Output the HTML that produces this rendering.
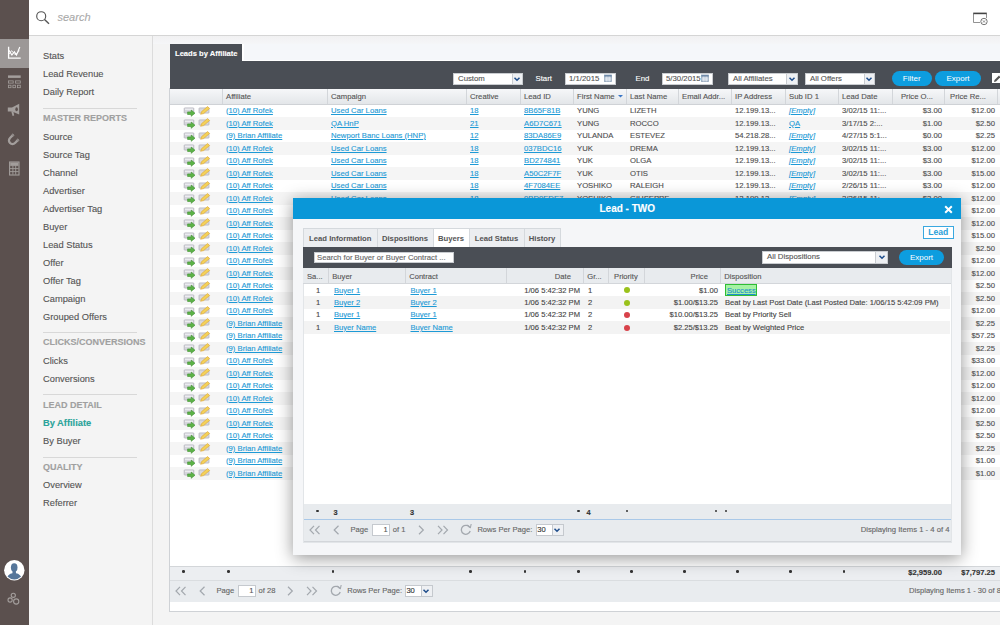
<!DOCTYPE html><html><head><meta charset="utf-8"><style>
*{margin:0;padding:0;box-sizing:border-box}
html,body{width:1000px;height:625px;overflow:hidden;background:#f4f4f4;font-family:"Liberation Sans", sans-serif;position:relative}
.a{position:absolute}
.t{position:absolute;white-space:nowrap;line-height:1;-webkit-text-stroke:0.12px currentColor}
.lk{color:#1d9ad6;text-decoration:underline}
</style></head><body><div class="a" style="left:0;top:0;width:29px;height:625px;background:#5b504e"></div>
<div class="a" style="left:0;top:39px;width:29px;height:29px;background:#9c9897"></div>
<div class="a" style="left:29px;top:0;width:971px;height:36px;background:#fff;border-bottom:1px solid #d5d5d5"></div>
<div class="a" style="left:152px;top:36px;width:1px;height:589px;background:#dcdcdc"></div>
<div class="t" style="left:43px;top:52.1px;font-size:9.3px;color:#555">Stats</div>
<div class="t" style="left:43px;top:70.1px;font-size:9.3px;color:#555">Lead Revenue</div>
<div class="t" style="left:43px;top:88.1px;font-size:9.3px;color:#555">Daily Report</div>
<div class="a" style="left:43px;top:108px;width:94px;height:1px;background:#d8d8d8"></div>
<div class="t" style="left:43px;top:114.1px;font-size:9px;font-weight:bold;color:#a0a0a0">MASTER REPORTS</div>
<div class="t" style="left:43px;top:133.1px;font-size:9.3px;color:#555">Source</div>
<div class="t" style="left:43px;top:151.1px;font-size:9.3px;color:#555">Source Tag</div>
<div class="t" style="left:43px;top:169.1px;font-size:9.3px;color:#555">Channel</div>
<div class="t" style="left:43px;top:187.1px;font-size:9.3px;color:#555">Advertiser</div>
<div class="t" style="left:43px;top:205.1px;font-size:9.3px;color:#555">Advertiser Tag</div>
<div class="t" style="left:43px;top:223.1px;font-size:9.3px;color:#555">Buyer</div>
<div class="t" style="left:43px;top:241.1px;font-size:9.3px;color:#555">Lead Status</div>
<div class="t" style="left:43px;top:259.1px;font-size:9.3px;color:#555">Offer</div>
<div class="t" style="left:43px;top:277.1px;font-size:9.3px;color:#555">Offer Tag</div>
<div class="t" style="left:43px;top:295.1px;font-size:9.3px;color:#555">Campaign</div>
<div class="t" style="left:43px;top:313.1px;font-size:9.3px;color:#555">Grouped Offers</div>
<div class="a" style="left:43px;top:331.5px;width:94px;height:1px;background:#d8d8d8"></div>
<div class="t" style="left:43px;top:338.1px;font-size:9px;font-weight:bold;color:#a0a0a0">CLICKS/CONVERSIONS</div>
<div class="t" style="left:43px;top:357.1px;font-size:9.3px;color:#555">Clicks</div>
<div class="t" style="left:43px;top:375.1px;font-size:9.3px;color:#555">Conversions</div>
<div class="a" style="left:43px;top:394px;width:94px;height:1px;background:#d8d8d8"></div>
<div class="t" style="left:43px;top:401.1px;font-size:9px;font-weight:bold;color:#a0a0a0">LEAD DETAIL</div>
<div class="t" style="left:43px;top:419.1px;font-size:9.3px;font-weight:bold;color:#2aa39a">By Affiliate</div>
<div class="t" style="left:43px;top:437.1px;font-size:9.3px;color:#555">By Buyer</div>
<div class="a" style="left:43px;top:456.5px;width:94px;height:1px;background:#d8d8d8"></div>
<div class="t" style="left:43px;top:463.1px;font-size:9px;font-weight:bold;color:#a0a0a0">QUALITY</div>
<div class="t" style="left:43px;top:481.1px;font-size:9.3px;color:#555">Overview</div>
<div class="t" style="left:43px;top:499.1px;font-size:9.3px;color:#555">Referrer</div>
<div class="a" style="left:153px;top:36px;width:847px;height:8px;background:linear-gradient(#f1f1f2,#f5f6f8)"></div>
<div class="a" style="left:242px;top:44px;width:760px;height:17px;background:#f5f7fa;border-left:2px solid #fff;border-bottom:1.5px solid #fff"></div>
<div class="a" style="left:169px;top:88px;width:840px;height:524px;background:#fff;border-left:1px solid #cfd2d6;border-bottom:1px solid #cfd2d6"></div>
<div class="a" style="left:170px;top:44.3px;width:72.3px;height:17px;background:#4a4e55"></div>
<div class="t" style="left:175px;top:49.6px;font-size:7.6px;font-weight:bold;color:#fff">Leads by Affiliate</div>
<div class="a" style="left:170px;top:61px;width:830px;height:28px;background:#4a4e55"></div>
<div class="a" style="left:170px;top:89px;width:830px;height:476px;background:#fff"></div>
<div class="a" style="left:170px;top:89px;width:830px;height:15.5px;background:linear-gradient(#f6f7f9,#e3e6e9);border-bottom:1px solid #cfd2d6"></div>
<div class="a" style="left:222px;top:89px;width:1px;height:15px;background:#d3d6da"></div>
<div class="a" style="left:327px;top:89px;width:1px;height:15px;background:#d3d6da"></div>
<div class="a" style="left:466px;top:89px;width:1px;height:15px;background:#d3d6da"></div>
<div class="a" style="left:520px;top:89px;width:1px;height:15px;background:#d3d6da"></div>
<div class="a" style="left:573px;top:89px;width:1px;height:15px;background:#d3d6da"></div>
<div class="a" style="left:626px;top:89px;width:1px;height:15px;background:#d3d6da"></div>
<div class="a" style="left:678px;top:89px;width:1px;height:15px;background:#d3d6da"></div>
<div class="a" style="left:731px;top:89px;width:1px;height:15px;background:#d3d6da"></div>
<div class="a" style="left:785px;top:89px;width:1px;height:15px;background:#d3d6da"></div>
<div class="a" style="left:838px;top:89px;width:1px;height:15px;background:#d3d6da"></div>
<div class="a" style="left:892px;top:89px;width:1px;height:15px;background:#d3d6da"></div>
<div class="a" style="left:944px;top:89px;width:1px;height:15px;background:#d3d6da"></div>
<div class="a" style="left:997px;top:89px;width:1px;height:15px;background:#d3d6da"></div>
<div class="t" style="left:226px;top:93.4px;font-size:7.7px;color:#555">Affiliate</div>
<div class="t" style="left:331px;top:93.4px;font-size:7.7px;color:#555">Campaign</div>
<div class="t" style="left:470px;top:93.4px;font-size:7.7px;color:#555">Creative</div>
<div class="t" style="left:524px;top:93.4px;font-size:7.7px;color:#555">Lead ID</div>
<div class="t" style="left:577px;top:93.4px;font-size:7.7px;color:#555">First Name</div>
<div class="t" style="left:630px;top:93.4px;font-size:7.7px;color:#555">Last Name</div>
<div class="t" style="left:682px;top:93.4px;font-size:7.7px;color:#555">Email Addr...</div>
<div class="t" style="left:735px;top:93.4px;font-size:7.7px;color:#555">IP Address</div>
<div class="t" style="left:789px;top:93.4px;font-size:7.7px;color:#555">Sub ID 1</div>
<div class="t" style="left:842px;top:93.4px;font-size:7.7px;color:#555">Lead Date</div>
<div class="t" style="right:67px;top:93.4px;font-size:7.7px;color:#555">Price O...</div>
<div class="t" style="right:14px;top:93.4px;font-size:7.7px;color:#555">Price Re...</div>
<svg class="a" style="left:618px;top:94.5px" width="5" height="3" viewBox="0 0 5 3"><path d="M0 0 H5 L2.5 2.6 Z" fill="#3a76c6"/></svg>
<div class="t lk" style="left:226px;top:106.56px;font-size:7.7px;">(10) Aff Rofek</div>
<div class="t lk" style="left:331px;top:106.56px;font-size:7.7px;">Used Car Loans</div>
<div class="t lk" style="left:470px;top:106.56px;font-size:7.7px;">18</div>
<div class="t lk" style="left:524px;top:106.56px;font-size:7.7px;">8B65F81B</div>
<div class="t" style="left:577px;top:106.56px;font-size:7.7px;color:#4e4e4e;">YUNG</div>
<div class="t" style="left:630px;top:106.56px;font-size:7.7px;color:#4e4e4e;">LIZETH</div>
<div class="t" style="left:735px;top:106.56px;font-size:7.7px;color:#4e4e4e;">12.199.13...</div>
<div class="t lk" style="left:789px;top:106.56px;font-size:7.7px;font-style:italic;">[Empty]</div>
<div class="t" style="left:842px;top:106.56px;font-size:7.7px;color:#4e4e4e;">3/02/15 11:...</div>
<div class="t" style="right:58px;top:106.56px;font-size:7.7px;color:#4e4e4e">$3.00</div>
<div class="t" style="right:5px;top:106.56px;font-size:7.7px;color:#4e4e4e">$12.00</div>
<div class="a" style="left:170px;top:117.0px;width:830px;height:12.5px;background:#f5f5f5"></div>
<div class="t lk" style="left:226px;top:119.56px;font-size:7.7px;">(10) Aff Rofek</div>
<div class="t lk" style="left:331px;top:119.56px;font-size:7.7px;">QA HnP</div>
<div class="t lk" style="left:470px;top:119.56px;font-size:7.7px;">21</div>
<div class="t lk" style="left:524px;top:119.56px;font-size:7.7px;">A6D7C671</div>
<div class="t" style="left:577px;top:119.56px;font-size:7.7px;color:#4e4e4e;">YUNG</div>
<div class="t" style="left:630px;top:119.56px;font-size:7.7px;color:#4e4e4e;">ROCCO</div>
<div class="t" style="left:735px;top:119.56px;font-size:7.7px;color:#4e4e4e;">12.199.13...</div>
<div class="t lk" style="left:789px;top:119.56px;font-size:7.7px;">QA</div>
<div class="t" style="left:842px;top:119.56px;font-size:7.7px;color:#4e4e4e;">3/17/15 2:...</div>
<div class="t" style="right:58px;top:119.56px;font-size:7.7px;color:#4e4e4e">$1.00</div>
<div class="t" style="right:5px;top:119.56px;font-size:7.7px;color:#4e4e4e">$2.50</div>
<div class="t lk" style="left:226px;top:131.56px;font-size:7.7px;">(9) Brian Affiliate</div>
<div class="t lk" style="left:331px;top:131.56px;font-size:7.7px;">Newport Banc Loans (HNP)</div>
<div class="t lk" style="left:470px;top:131.56px;font-size:7.7px;">12</div>
<div class="t lk" style="left:524px;top:131.56px;font-size:7.7px;">83DA86E9</div>
<div class="t" style="left:577px;top:131.56px;font-size:7.7px;color:#4e4e4e;">YULANDA</div>
<div class="t" style="left:630px;top:131.56px;font-size:7.7px;color:#4e4e4e;">ESTEVEZ</div>
<div class="t" style="left:735px;top:131.56px;font-size:7.7px;color:#4e4e4e;">54.218.28...</div>
<div class="t lk" style="left:789px;top:131.56px;font-size:7.7px;font-style:italic;">[Empty]</div>
<div class="t" style="left:842px;top:131.56px;font-size:7.7px;color:#4e4e4e;">4/27/15 5:1...</div>
<div class="t" style="right:58px;top:131.56px;font-size:7.7px;color:#4e4e4e">$0.00</div>
<div class="t" style="right:5px;top:131.56px;font-size:7.7px;color:#4e4e4e">$2.25</div>
<div class="a" style="left:170px;top:142.0px;width:830px;height:12.5px;background:#f5f5f5"></div>
<div class="t lk" style="left:226px;top:144.56px;font-size:7.7px;">(10) Aff Rofek</div>
<div class="t lk" style="left:331px;top:144.56px;font-size:7.7px;">Used Car Loans</div>
<div class="t lk" style="left:470px;top:144.56px;font-size:7.7px;">18</div>
<div class="t lk" style="left:524px;top:144.56px;font-size:7.7px;">037BDC16</div>
<div class="t" style="left:577px;top:144.56px;font-size:7.7px;color:#4e4e4e;">YUK</div>
<div class="t" style="left:630px;top:144.56px;font-size:7.7px;color:#4e4e4e;">DREMA</div>
<div class="t" style="left:735px;top:144.56px;font-size:7.7px;color:#4e4e4e;">12.199.13...</div>
<div class="t lk" style="left:789px;top:144.56px;font-size:7.7px;font-style:italic;">[Empty]</div>
<div class="t" style="left:842px;top:144.56px;font-size:7.7px;color:#4e4e4e;">3/02/15 11:...</div>
<div class="t" style="right:58px;top:144.56px;font-size:7.7px;color:#4e4e4e">$3.00</div>
<div class="t" style="right:5px;top:144.56px;font-size:7.7px;color:#4e4e4e">$12.00</div>
<div class="t lk" style="left:226px;top:156.56px;font-size:7.7px;">(10) Aff Rofek</div>
<div class="t lk" style="left:331px;top:156.56px;font-size:7.7px;">Used Car Loans</div>
<div class="t lk" style="left:470px;top:156.56px;font-size:7.7px;">18</div>
<div class="t lk" style="left:524px;top:156.56px;font-size:7.7px;">BD274841</div>
<div class="t" style="left:577px;top:156.56px;font-size:7.7px;color:#4e4e4e;">YUK</div>
<div class="t" style="left:630px;top:156.56px;font-size:7.7px;color:#4e4e4e;">OLGA</div>
<div class="t" style="left:735px;top:156.56px;font-size:7.7px;color:#4e4e4e;">12.199.13...</div>
<div class="t lk" style="left:789px;top:156.56px;font-size:7.7px;font-style:italic;">[Empty]</div>
<div class="t" style="left:842px;top:156.56px;font-size:7.7px;color:#4e4e4e;">3/02/15 11:...</div>
<div class="t" style="right:58px;top:156.56px;font-size:7.7px;color:#4e4e4e">$3.00</div>
<div class="t" style="right:5px;top:156.56px;font-size:7.7px;color:#4e4e4e">$12.00</div>
<div class="a" style="left:170px;top:167.0px;width:830px;height:12.5px;background:#f5f5f5"></div>
<div class="t lk" style="left:226px;top:169.56px;font-size:7.7px;">(10) Aff Rofek</div>
<div class="t lk" style="left:331px;top:169.56px;font-size:7.7px;">Used Car Loans</div>
<div class="t lk" style="left:470px;top:169.56px;font-size:7.7px;">18</div>
<div class="t lk" style="left:524px;top:169.56px;font-size:7.7px;">A50C2F7F</div>
<div class="t" style="left:577px;top:169.56px;font-size:7.7px;color:#4e4e4e;">YUK</div>
<div class="t" style="left:630px;top:169.56px;font-size:7.7px;color:#4e4e4e;">OTIS</div>
<div class="t" style="left:735px;top:169.56px;font-size:7.7px;color:#4e4e4e;">12.199.13...</div>
<div class="t lk" style="left:789px;top:169.56px;font-size:7.7px;font-style:italic;">[Empty]</div>
<div class="t" style="left:842px;top:169.56px;font-size:7.7px;color:#4e4e4e;">3/02/15 11:...</div>
<div class="t" style="right:58px;top:169.56px;font-size:7.7px;color:#4e4e4e">$3.00</div>
<div class="t" style="right:5px;top:169.56px;font-size:7.7px;color:#4e4e4e">$15.00</div>
<div class="t lk" style="left:226px;top:181.56px;font-size:7.7px;">(10) Aff Rofek</div>
<div class="t lk" style="left:331px;top:181.56px;font-size:7.7px;">Used Car Loans</div>
<div class="t lk" style="left:470px;top:181.56px;font-size:7.7px;">18</div>
<div class="t lk" style="left:524px;top:181.56px;font-size:7.7px;">4F7084EE</div>
<div class="t" style="left:577px;top:181.56px;font-size:7.7px;color:#4e4e4e;">YOSHIKO</div>
<div class="t" style="left:630px;top:181.56px;font-size:7.7px;color:#4e4e4e;">RALEIGH</div>
<div class="t" style="left:735px;top:181.56px;font-size:7.7px;color:#4e4e4e;">12.199.13...</div>
<div class="t lk" style="left:789px;top:181.56px;font-size:7.7px;font-style:italic;">[Empty]</div>
<div class="t" style="left:842px;top:181.56px;font-size:7.7px;color:#4e4e4e;">2/26/15 11:...</div>
<div class="t" style="right:58px;top:181.56px;font-size:7.7px;color:#4e4e4e">$3.00</div>
<div class="t" style="right:5px;top:181.56px;font-size:7.7px;color:#4e4e4e">$12.00</div>
<div class="a" style="left:170px;top:192.0px;width:830px;height:12.5px;background:#f5f5f5"></div>
<div class="t lk" style="left:226px;top:194.56px;font-size:7.7px;">(10) Aff Rofek</div>
<div class="t lk" style="left:331px;top:194.56px;font-size:7.7px;">Used Car Loans</div>
<div class="t lk" style="left:470px;top:194.56px;font-size:7.7px;">18</div>
<div class="t lk" style="left:524px;top:194.56px;font-size:7.7px;">0BD0EDE7</div>
<div class="t" style="left:577px;top:194.56px;font-size:7.7px;color:#4e4e4e;">YOSHIKO</div>
<div class="t" style="left:630px;top:194.56px;font-size:7.7px;color:#4e4e4e;">GIUSEPPE</div>
<div class="t" style="left:735px;top:194.56px;font-size:7.7px;color:#4e4e4e;">12.199.13...</div>
<div class="t lk" style="left:789px;top:194.56px;font-size:7.7px;font-style:italic;">[Empty]</div>
<div class="t" style="left:842px;top:194.56px;font-size:7.7px;color:#4e4e4e;">2/26/15 11:...</div>
<div class="t" style="right:58px;top:194.56px;font-size:7.7px;color:#4e4e4e">$3.00</div>
<div class="t" style="right:5px;top:194.56px;font-size:7.7px;color:#4e4e4e">$12.00</div>
<div class="t lk" style="left:226px;top:206.56px;font-size:7.7px;">(10) Aff Rofek</div>
<div class="t lk" style="left:331px;top:206.56px;font-size:7.7px;">Used Car Loans</div>
<div class="t lk" style="left:470px;top:206.56px;font-size:7.7px;">18</div>
<div class="t lk" style="left:524px;top:206.56px;font-size:7.7px;">4F7084EE</div>
<div class="t" style="left:577px;top:206.56px;font-size:7.7px;color:#4e4e4e;">YOSHIKO</div>
<div class="t" style="left:630px;top:206.56px;font-size:7.7px;color:#4e4e4e;">RALEIGH</div>
<div class="t" style="left:735px;top:206.56px;font-size:7.7px;color:#4e4e4e;">12.199.13...</div>
<div class="t lk" style="left:789px;top:206.56px;font-size:7.7px;font-style:italic;">[Empty]</div>
<div class="t" style="left:842px;top:206.56px;font-size:7.7px;color:#4e4e4e;">2/26/15 11:...</div>
<div class="t" style="right:58px;top:206.56px;font-size:7.7px;color:#4e4e4e">$3.00</div>
<div class="t" style="right:5px;top:206.56px;font-size:7.7px;color:#4e4e4e">$12.00</div>
<div class="a" style="left:170px;top:217.0px;width:830px;height:12.5px;background:#f5f5f5"></div>
<div class="t lk" style="left:226px;top:219.56px;font-size:7.7px;">(10) Aff Rofek</div>
<div class="t lk" style="left:331px;top:219.56px;font-size:7.7px;">Used Car Loans</div>
<div class="t lk" style="left:470px;top:219.56px;font-size:7.7px;">18</div>
<div class="t lk" style="left:524px;top:219.56px;font-size:7.7px;">4F7084EE</div>
<div class="t" style="left:577px;top:219.56px;font-size:7.7px;color:#4e4e4e;">YOSHIKO</div>
<div class="t" style="left:630px;top:219.56px;font-size:7.7px;color:#4e4e4e;">RALEIGH</div>
<div class="t" style="left:735px;top:219.56px;font-size:7.7px;color:#4e4e4e;">12.199.13...</div>
<div class="t lk" style="left:789px;top:219.56px;font-size:7.7px;font-style:italic;">[Empty]</div>
<div class="t" style="left:842px;top:219.56px;font-size:7.7px;color:#4e4e4e;">2/26/15 11:...</div>
<div class="t" style="right:58px;top:219.56px;font-size:7.7px;color:#4e4e4e">$3.00</div>
<div class="t" style="right:5px;top:219.56px;font-size:7.7px;color:#4e4e4e">$12.00</div>
<div class="t lk" style="left:226px;top:231.56px;font-size:7.7px;">(10) Aff Rofek</div>
<div class="t lk" style="left:331px;top:231.56px;font-size:7.7px;">Used Car Loans</div>
<div class="t lk" style="left:470px;top:231.56px;font-size:7.7px;">18</div>
<div class="t lk" style="left:524px;top:231.56px;font-size:7.7px;">4F7084EE</div>
<div class="t" style="left:577px;top:231.56px;font-size:7.7px;color:#4e4e4e;">YOSHIKO</div>
<div class="t" style="left:630px;top:231.56px;font-size:7.7px;color:#4e4e4e;">RALEIGH</div>
<div class="t" style="left:735px;top:231.56px;font-size:7.7px;color:#4e4e4e;">12.199.13...</div>
<div class="t lk" style="left:789px;top:231.56px;font-size:7.7px;font-style:italic;">[Empty]</div>
<div class="t" style="left:842px;top:231.56px;font-size:7.7px;color:#4e4e4e;">2/26/15 11:...</div>
<div class="t" style="right:58px;top:231.56px;font-size:7.7px;color:#4e4e4e">$3.00</div>
<div class="t" style="right:5px;top:231.56px;font-size:7.7px;color:#4e4e4e">$15.00</div>
<div class="a" style="left:170px;top:242.0px;width:830px;height:12.5px;background:#f5f5f5"></div>
<div class="t lk" style="left:226px;top:244.56px;font-size:7.7px;">(10) Aff Rofek</div>
<div class="t lk" style="left:331px;top:244.56px;font-size:7.7px;">Used Car Loans</div>
<div class="t lk" style="left:470px;top:244.56px;font-size:7.7px;">18</div>
<div class="t lk" style="left:524px;top:244.56px;font-size:7.7px;">4F7084EE</div>
<div class="t" style="left:577px;top:244.56px;font-size:7.7px;color:#4e4e4e;">YOSHIKO</div>
<div class="t" style="left:630px;top:244.56px;font-size:7.7px;color:#4e4e4e;">RALEIGH</div>
<div class="t" style="left:735px;top:244.56px;font-size:7.7px;color:#4e4e4e;">12.199.13...</div>
<div class="t lk" style="left:789px;top:244.56px;font-size:7.7px;font-style:italic;">[Empty]</div>
<div class="t" style="left:842px;top:244.56px;font-size:7.7px;color:#4e4e4e;">2/26/15 11:...</div>
<div class="t" style="right:58px;top:244.56px;font-size:7.7px;color:#4e4e4e">$3.00</div>
<div class="t" style="right:5px;top:244.56px;font-size:7.7px;color:#4e4e4e">$2.50</div>
<div class="t lk" style="left:226px;top:256.56px;font-size:7.7px;">(10) Aff Rofek</div>
<div class="t lk" style="left:331px;top:256.56px;font-size:7.7px;">Used Car Loans</div>
<div class="t lk" style="left:470px;top:256.56px;font-size:7.7px;">18</div>
<div class="t lk" style="left:524px;top:256.56px;font-size:7.7px;">4F7084EE</div>
<div class="t" style="left:577px;top:256.56px;font-size:7.7px;color:#4e4e4e;">YOSHIKO</div>
<div class="t" style="left:630px;top:256.56px;font-size:7.7px;color:#4e4e4e;">RALEIGH</div>
<div class="t" style="left:735px;top:256.56px;font-size:7.7px;color:#4e4e4e;">12.199.13...</div>
<div class="t lk" style="left:789px;top:256.56px;font-size:7.7px;font-style:italic;">[Empty]</div>
<div class="t" style="left:842px;top:256.56px;font-size:7.7px;color:#4e4e4e;">2/26/15 11:...</div>
<div class="t" style="right:58px;top:256.56px;font-size:7.7px;color:#4e4e4e">$3.00</div>
<div class="t" style="right:5px;top:256.56px;font-size:7.7px;color:#4e4e4e">$12.00</div>
<div class="a" style="left:170px;top:267.0px;width:830px;height:12.5px;background:#f5f5f5"></div>
<div class="t lk" style="left:226px;top:269.56px;font-size:7.7px;">(10) Aff Rofek</div>
<div class="t lk" style="left:331px;top:269.56px;font-size:7.7px;">Used Car Loans</div>
<div class="t lk" style="left:470px;top:269.56px;font-size:7.7px;">18</div>
<div class="t lk" style="left:524px;top:269.56px;font-size:7.7px;">4F7084EE</div>
<div class="t" style="left:577px;top:269.56px;font-size:7.7px;color:#4e4e4e;">YOSHIKO</div>
<div class="t" style="left:630px;top:269.56px;font-size:7.7px;color:#4e4e4e;">RALEIGH</div>
<div class="t" style="left:735px;top:269.56px;font-size:7.7px;color:#4e4e4e;">12.199.13...</div>
<div class="t lk" style="left:789px;top:269.56px;font-size:7.7px;font-style:italic;">[Empty]</div>
<div class="t" style="left:842px;top:269.56px;font-size:7.7px;color:#4e4e4e;">2/26/15 11:...</div>
<div class="t" style="right:58px;top:269.56px;font-size:7.7px;color:#4e4e4e">$3.00</div>
<div class="t" style="right:5px;top:269.56px;font-size:7.7px;color:#4e4e4e">$12.00</div>
<div class="t lk" style="left:226px;top:281.56px;font-size:7.7px;">(10) Aff Rofek</div>
<div class="t lk" style="left:331px;top:281.56px;font-size:7.7px;">Used Car Loans</div>
<div class="t lk" style="left:470px;top:281.56px;font-size:7.7px;">18</div>
<div class="t lk" style="left:524px;top:281.56px;font-size:7.7px;">4F7084EE</div>
<div class="t" style="left:577px;top:281.56px;font-size:7.7px;color:#4e4e4e;">YOSHIKO</div>
<div class="t" style="left:630px;top:281.56px;font-size:7.7px;color:#4e4e4e;">RALEIGH</div>
<div class="t" style="left:735px;top:281.56px;font-size:7.7px;color:#4e4e4e;">12.199.13...</div>
<div class="t lk" style="left:789px;top:281.56px;font-size:7.7px;font-style:italic;">[Empty]</div>
<div class="t" style="left:842px;top:281.56px;font-size:7.7px;color:#4e4e4e;">2/26/15 11:...</div>
<div class="t" style="right:58px;top:281.56px;font-size:7.7px;color:#4e4e4e">$3.00</div>
<div class="t" style="right:5px;top:281.56px;font-size:7.7px;color:#4e4e4e">$2.50</div>
<div class="a" style="left:170px;top:292.0px;width:830px;height:12.5px;background:#f5f5f5"></div>
<div class="t lk" style="left:226px;top:294.56px;font-size:7.7px;">(10) Aff Rofek</div>
<div class="t lk" style="left:331px;top:294.56px;font-size:7.7px;">Used Car Loans</div>
<div class="t lk" style="left:470px;top:294.56px;font-size:7.7px;">18</div>
<div class="t lk" style="left:524px;top:294.56px;font-size:7.7px;">4F7084EE</div>
<div class="t" style="left:577px;top:294.56px;font-size:7.7px;color:#4e4e4e;">YOSHIKO</div>
<div class="t" style="left:630px;top:294.56px;font-size:7.7px;color:#4e4e4e;">RALEIGH</div>
<div class="t" style="left:735px;top:294.56px;font-size:7.7px;color:#4e4e4e;">12.199.13...</div>
<div class="t lk" style="left:789px;top:294.56px;font-size:7.7px;font-style:italic;">[Empty]</div>
<div class="t" style="left:842px;top:294.56px;font-size:7.7px;color:#4e4e4e;">2/26/15 11:...</div>
<div class="t" style="right:58px;top:294.56px;font-size:7.7px;color:#4e4e4e">$3.00</div>
<div class="t" style="right:5px;top:294.56px;font-size:7.7px;color:#4e4e4e">$2.50</div>
<div class="t lk" style="left:226px;top:306.56px;font-size:7.7px;">(10) Aff Rofek</div>
<div class="t lk" style="left:331px;top:306.56px;font-size:7.7px;">Used Car Loans</div>
<div class="t lk" style="left:470px;top:306.56px;font-size:7.7px;">18</div>
<div class="t lk" style="left:524px;top:306.56px;font-size:7.7px;">4F7084EE</div>
<div class="t" style="left:577px;top:306.56px;font-size:7.7px;color:#4e4e4e;">YOSHIKO</div>
<div class="t" style="left:630px;top:306.56px;font-size:7.7px;color:#4e4e4e;">RALEIGH</div>
<div class="t" style="left:735px;top:306.56px;font-size:7.7px;color:#4e4e4e;">12.199.13...</div>
<div class="t lk" style="left:789px;top:306.56px;font-size:7.7px;font-style:italic;">[Empty]</div>
<div class="t" style="left:842px;top:306.56px;font-size:7.7px;color:#4e4e4e;">2/26/15 11:...</div>
<div class="t" style="right:58px;top:306.56px;font-size:7.7px;color:#4e4e4e">$3.00</div>
<div class="t" style="right:5px;top:306.56px;font-size:7.7px;color:#4e4e4e">$12.00</div>
<div class="a" style="left:170px;top:317.0px;width:830px;height:12.5px;background:#f5f5f5"></div>
<div class="t lk" style="left:226px;top:319.56px;font-size:7.7px;">(9) Brian Affiliate</div>
<div class="t lk" style="left:331px;top:319.56px;font-size:7.7px;">Used Car Loans</div>
<div class="t lk" style="left:470px;top:319.56px;font-size:7.7px;">18</div>
<div class="t lk" style="left:524px;top:319.56px;font-size:7.7px;">4F7084EE</div>
<div class="t" style="left:577px;top:319.56px;font-size:7.7px;color:#4e4e4e;">YOSHIKO</div>
<div class="t" style="left:630px;top:319.56px;font-size:7.7px;color:#4e4e4e;">RALEIGH</div>
<div class="t" style="left:735px;top:319.56px;font-size:7.7px;color:#4e4e4e;">12.199.13...</div>
<div class="t lk" style="left:789px;top:319.56px;font-size:7.7px;font-style:italic;">[Empty]</div>
<div class="t" style="left:842px;top:319.56px;font-size:7.7px;color:#4e4e4e;">2/26/15 11:...</div>
<div class="t" style="right:58px;top:319.56px;font-size:7.7px;color:#4e4e4e">$3.00</div>
<div class="t" style="right:5px;top:319.56px;font-size:7.7px;color:#4e4e4e">$2.25</div>
<div class="t lk" style="left:226px;top:331.56px;font-size:7.7px;">(9) Brian Affiliate</div>
<div class="t lk" style="left:331px;top:331.56px;font-size:7.7px;">Used Car Loans</div>
<div class="t lk" style="left:470px;top:331.56px;font-size:7.7px;">18</div>
<div class="t lk" style="left:524px;top:331.56px;font-size:7.7px;">4F7084EE</div>
<div class="t" style="left:577px;top:331.56px;font-size:7.7px;color:#4e4e4e;">YOSHIKO</div>
<div class="t" style="left:630px;top:331.56px;font-size:7.7px;color:#4e4e4e;">RALEIGH</div>
<div class="t" style="left:735px;top:331.56px;font-size:7.7px;color:#4e4e4e;">12.199.13...</div>
<div class="t lk" style="left:789px;top:331.56px;font-size:7.7px;font-style:italic;">[Empty]</div>
<div class="t" style="left:842px;top:331.56px;font-size:7.7px;color:#4e4e4e;">2/26/15 11:...</div>
<div class="t" style="right:58px;top:331.56px;font-size:7.7px;color:#4e4e4e">$3.00</div>
<div class="t" style="right:5px;top:331.56px;font-size:7.7px;color:#4e4e4e">$57.25</div>
<div class="a" style="left:170px;top:342.0px;width:830px;height:12.5px;background:#f5f5f5"></div>
<div class="t lk" style="left:226px;top:344.56px;font-size:7.7px;">(9) Brian Affiliate</div>
<div class="t lk" style="left:331px;top:344.56px;font-size:7.7px;">Used Car Loans</div>
<div class="t lk" style="left:470px;top:344.56px;font-size:7.7px;">18</div>
<div class="t lk" style="left:524px;top:344.56px;font-size:7.7px;">4F7084EE</div>
<div class="t" style="left:577px;top:344.56px;font-size:7.7px;color:#4e4e4e;">YOSHIKO</div>
<div class="t" style="left:630px;top:344.56px;font-size:7.7px;color:#4e4e4e;">RALEIGH</div>
<div class="t" style="left:735px;top:344.56px;font-size:7.7px;color:#4e4e4e;">12.199.13...</div>
<div class="t lk" style="left:789px;top:344.56px;font-size:7.7px;font-style:italic;">[Empty]</div>
<div class="t" style="left:842px;top:344.56px;font-size:7.7px;color:#4e4e4e;">2/26/15 11:...</div>
<div class="t" style="right:58px;top:344.56px;font-size:7.7px;color:#4e4e4e">$3.00</div>
<div class="t" style="right:5px;top:344.56px;font-size:7.7px;color:#4e4e4e">$2.25</div>
<div class="t lk" style="left:226px;top:356.56px;font-size:7.7px;">(10) Aff Rofek</div>
<div class="t lk" style="left:331px;top:356.56px;font-size:7.7px;">Used Car Loans</div>
<div class="t lk" style="left:470px;top:356.56px;font-size:7.7px;">18</div>
<div class="t lk" style="left:524px;top:356.56px;font-size:7.7px;">4F7084EE</div>
<div class="t" style="left:577px;top:356.56px;font-size:7.7px;color:#4e4e4e;">YOSHIKO</div>
<div class="t" style="left:630px;top:356.56px;font-size:7.7px;color:#4e4e4e;">RALEIGH</div>
<div class="t" style="left:735px;top:356.56px;font-size:7.7px;color:#4e4e4e;">12.199.13...</div>
<div class="t lk" style="left:789px;top:356.56px;font-size:7.7px;font-style:italic;">[Empty]</div>
<div class="t" style="left:842px;top:356.56px;font-size:7.7px;color:#4e4e4e;">2/26/15 11:...</div>
<div class="t" style="right:58px;top:356.56px;font-size:7.7px;color:#4e4e4e">$3.00</div>
<div class="t" style="right:5px;top:356.56px;font-size:7.7px;color:#4e4e4e">$33.00</div>
<div class="a" style="left:170px;top:367.0px;width:830px;height:12.5px;background:#f5f5f5"></div>
<div class="t lk" style="left:226px;top:369.56px;font-size:7.7px;">(10) Aff Rofek</div>
<div class="t lk" style="left:331px;top:369.56px;font-size:7.7px;">Used Car Loans</div>
<div class="t lk" style="left:470px;top:369.56px;font-size:7.7px;">18</div>
<div class="t lk" style="left:524px;top:369.56px;font-size:7.7px;">4F7084EE</div>
<div class="t" style="left:577px;top:369.56px;font-size:7.7px;color:#4e4e4e;">YOSHIKO</div>
<div class="t" style="left:630px;top:369.56px;font-size:7.7px;color:#4e4e4e;">RALEIGH</div>
<div class="t" style="left:735px;top:369.56px;font-size:7.7px;color:#4e4e4e;">12.199.13...</div>
<div class="t lk" style="left:789px;top:369.56px;font-size:7.7px;font-style:italic;">[Empty]</div>
<div class="t" style="left:842px;top:369.56px;font-size:7.7px;color:#4e4e4e;">2/26/15 11:...</div>
<div class="t" style="right:58px;top:369.56px;font-size:7.7px;color:#4e4e4e">$3.00</div>
<div class="t" style="right:5px;top:369.56px;font-size:7.7px;color:#4e4e4e">$12.00</div>
<div class="t lk" style="left:226px;top:381.56px;font-size:7.7px;">(10) Aff Rofek</div>
<div class="t lk" style="left:331px;top:381.56px;font-size:7.7px;">Used Car Loans</div>
<div class="t lk" style="left:470px;top:381.56px;font-size:7.7px;">18</div>
<div class="t lk" style="left:524px;top:381.56px;font-size:7.7px;">4F7084EE</div>
<div class="t" style="left:577px;top:381.56px;font-size:7.7px;color:#4e4e4e;">YOSHIKO</div>
<div class="t" style="left:630px;top:381.56px;font-size:7.7px;color:#4e4e4e;">RALEIGH</div>
<div class="t" style="left:735px;top:381.56px;font-size:7.7px;color:#4e4e4e;">12.199.13...</div>
<div class="t lk" style="left:789px;top:381.56px;font-size:7.7px;font-style:italic;">[Empty]</div>
<div class="t" style="left:842px;top:381.56px;font-size:7.7px;color:#4e4e4e;">2/26/15 11:...</div>
<div class="t" style="right:58px;top:381.56px;font-size:7.7px;color:#4e4e4e">$3.00</div>
<div class="t" style="right:5px;top:381.56px;font-size:7.7px;color:#4e4e4e">$12.00</div>
<div class="a" style="left:170px;top:392.0px;width:830px;height:12.5px;background:#f5f5f5"></div>
<div class="t lk" style="left:226px;top:394.56px;font-size:7.7px;">(10) Aff Rofek</div>
<div class="t lk" style="left:331px;top:394.56px;font-size:7.7px;">Used Car Loans</div>
<div class="t lk" style="left:470px;top:394.56px;font-size:7.7px;">18</div>
<div class="t lk" style="left:524px;top:394.56px;font-size:7.7px;">4F7084EE</div>
<div class="t" style="left:577px;top:394.56px;font-size:7.7px;color:#4e4e4e;">YOSHIKO</div>
<div class="t" style="left:630px;top:394.56px;font-size:7.7px;color:#4e4e4e;">RALEIGH</div>
<div class="t" style="left:735px;top:394.56px;font-size:7.7px;color:#4e4e4e;">12.199.13...</div>
<div class="t lk" style="left:789px;top:394.56px;font-size:7.7px;font-style:italic;">[Empty]</div>
<div class="t" style="left:842px;top:394.56px;font-size:7.7px;color:#4e4e4e;">2/26/15 11:...</div>
<div class="t" style="right:58px;top:394.56px;font-size:7.7px;color:#4e4e4e">$3.00</div>
<div class="t" style="right:5px;top:394.56px;font-size:7.7px;color:#4e4e4e">$12.00</div>
<div class="t lk" style="left:226px;top:406.56px;font-size:7.7px;">(10) Aff Rofek</div>
<div class="t lk" style="left:331px;top:406.56px;font-size:7.7px;">Used Car Loans</div>
<div class="t lk" style="left:470px;top:406.56px;font-size:7.7px;">18</div>
<div class="t lk" style="left:524px;top:406.56px;font-size:7.7px;">4F7084EE</div>
<div class="t" style="left:577px;top:406.56px;font-size:7.7px;color:#4e4e4e;">YOSHIKO</div>
<div class="t" style="left:630px;top:406.56px;font-size:7.7px;color:#4e4e4e;">RALEIGH</div>
<div class="t" style="left:735px;top:406.56px;font-size:7.7px;color:#4e4e4e;">12.199.13...</div>
<div class="t lk" style="left:789px;top:406.56px;font-size:7.7px;font-style:italic;">[Empty]</div>
<div class="t" style="left:842px;top:406.56px;font-size:7.7px;color:#4e4e4e;">2/26/15 11:...</div>
<div class="t" style="right:58px;top:406.56px;font-size:7.7px;color:#4e4e4e">$3.00</div>
<div class="t" style="right:5px;top:406.56px;font-size:7.7px;color:#4e4e4e">$12.00</div>
<div class="a" style="left:170px;top:417.0px;width:830px;height:12.5px;background:#f5f5f5"></div>
<div class="t lk" style="left:226px;top:419.56px;font-size:7.7px;">(10) Aff Rofek</div>
<div class="t lk" style="left:331px;top:419.56px;font-size:7.7px;">Used Car Loans</div>
<div class="t lk" style="left:470px;top:419.56px;font-size:7.7px;">18</div>
<div class="t lk" style="left:524px;top:419.56px;font-size:7.7px;">4F7084EE</div>
<div class="t" style="left:577px;top:419.56px;font-size:7.7px;color:#4e4e4e;">YOSHIKO</div>
<div class="t" style="left:630px;top:419.56px;font-size:7.7px;color:#4e4e4e;">RALEIGH</div>
<div class="t" style="left:735px;top:419.56px;font-size:7.7px;color:#4e4e4e;">12.199.13...</div>
<div class="t lk" style="left:789px;top:419.56px;font-size:7.7px;font-style:italic;">[Empty]</div>
<div class="t" style="left:842px;top:419.56px;font-size:7.7px;color:#4e4e4e;">2/26/15 11:...</div>
<div class="t" style="right:58px;top:419.56px;font-size:7.7px;color:#4e4e4e">$3.00</div>
<div class="t" style="right:5px;top:419.56px;font-size:7.7px;color:#4e4e4e">$2.50</div>
<div class="t lk" style="left:226px;top:431.56px;font-size:7.7px;">(10) Aff Rofek</div>
<div class="t lk" style="left:331px;top:431.56px;font-size:7.7px;">Used Car Loans</div>
<div class="t lk" style="left:470px;top:431.56px;font-size:7.7px;">18</div>
<div class="t lk" style="left:524px;top:431.56px;font-size:7.7px;">4F7084EE</div>
<div class="t" style="left:577px;top:431.56px;font-size:7.7px;color:#4e4e4e;">YOSHIKO</div>
<div class="t" style="left:630px;top:431.56px;font-size:7.7px;color:#4e4e4e;">RALEIGH</div>
<div class="t" style="left:735px;top:431.56px;font-size:7.7px;color:#4e4e4e;">12.199.13...</div>
<div class="t lk" style="left:789px;top:431.56px;font-size:7.7px;font-style:italic;">[Empty]</div>
<div class="t" style="left:842px;top:431.56px;font-size:7.7px;color:#4e4e4e;">2/26/15 11:...</div>
<div class="t" style="right:58px;top:431.56px;font-size:7.7px;color:#4e4e4e">$3.00</div>
<div class="t" style="right:5px;top:431.56px;font-size:7.7px;color:#4e4e4e">$2.50</div>
<div class="a" style="left:170px;top:442.0px;width:830px;height:12.5px;background:#f5f5f5"></div>
<div class="t lk" style="left:226px;top:444.56px;font-size:7.7px;">(9) Brian Affiliate</div>
<div class="t lk" style="left:331px;top:444.56px;font-size:7.7px;">Used Car Loans</div>
<div class="t lk" style="left:470px;top:444.56px;font-size:7.7px;">18</div>
<div class="t lk" style="left:524px;top:444.56px;font-size:7.7px;">4F7084EE</div>
<div class="t" style="left:577px;top:444.56px;font-size:7.7px;color:#4e4e4e;">YOSHIKO</div>
<div class="t" style="left:630px;top:444.56px;font-size:7.7px;color:#4e4e4e;">RALEIGH</div>
<div class="t" style="left:735px;top:444.56px;font-size:7.7px;color:#4e4e4e;">12.199.13...</div>
<div class="t lk" style="left:789px;top:444.56px;font-size:7.7px;font-style:italic;">[Empty]</div>
<div class="t" style="left:842px;top:444.56px;font-size:7.7px;color:#4e4e4e;">2/26/15 11:...</div>
<div class="t" style="right:58px;top:444.56px;font-size:7.7px;color:#4e4e4e">$3.00</div>
<div class="t" style="right:5px;top:444.56px;font-size:7.7px;color:#4e4e4e">$2.25</div>
<div class="t lk" style="left:226px;top:456.56px;font-size:7.7px;">(9) Brian Affiliate</div>
<div class="t lk" style="left:331px;top:456.56px;font-size:7.7px;">Used Car Loans</div>
<div class="t lk" style="left:470px;top:456.56px;font-size:7.7px;">18</div>
<div class="t lk" style="left:524px;top:456.56px;font-size:7.7px;">4F7084EE</div>
<div class="t" style="left:577px;top:456.56px;font-size:7.7px;color:#4e4e4e;">YOSHIKO</div>
<div class="t" style="left:630px;top:456.56px;font-size:7.7px;color:#4e4e4e;">RALEIGH</div>
<div class="t" style="left:735px;top:456.56px;font-size:7.7px;color:#4e4e4e;">12.199.13...</div>
<div class="t lk" style="left:789px;top:456.56px;font-size:7.7px;font-style:italic;">[Empty]</div>
<div class="t" style="left:842px;top:456.56px;font-size:7.7px;color:#4e4e4e;">2/26/15 11:...</div>
<div class="t" style="right:58px;top:456.56px;font-size:7.7px;color:#4e4e4e">$3.00</div>
<div class="t" style="right:5px;top:456.56px;font-size:7.7px;color:#4e4e4e">$1.00</div>
<div class="a" style="left:170px;top:467.0px;width:830px;height:12.5px;background:#f5f5f5"></div>
<div class="t lk" style="left:226px;top:469.56px;font-size:7.7px;">(9) Brian Affiliate</div>
<div class="t lk" style="left:331px;top:469.56px;font-size:7.7px;">Used Car Loans</div>
<div class="t lk" style="left:470px;top:469.56px;font-size:7.7px;">18</div>
<div class="t lk" style="left:524px;top:469.56px;font-size:7.7px;">4F7084EE</div>
<div class="t" style="left:577px;top:469.56px;font-size:7.7px;color:#4e4e4e;">YOSHIKO</div>
<div class="t" style="left:630px;top:469.56px;font-size:7.7px;color:#4e4e4e;">RALEIGH</div>
<div class="t" style="left:735px;top:469.56px;font-size:7.7px;color:#4e4e4e;">12.199.13...</div>
<div class="t lk" style="left:789px;top:469.56px;font-size:7.7px;font-style:italic;">[Empty]</div>
<div class="t" style="left:842px;top:469.56px;font-size:7.7px;color:#4e4e4e;">2/26/15 11:...</div>
<div class="t" style="right:58px;top:469.56px;font-size:7.7px;color:#4e4e4e">$3.00</div>
<div class="t" style="right:5px;top:469.56px;font-size:7.7px;color:#4e4e4e">$1.00</div>
<div class="a" style="left:170px;top:565.5px;width:830px;height:15px;background:#eceef1;border-top:1.5px solid #d3d6d9"></div>
<div class="a" style="left:170px;top:580px;width:830px;height:22px;background:#e9ecef;border-top:1px solid #dadde0"></div>
<div class="a" style="left:170px;top:602px;width:830px;height:9px;background:#fff"></div>
<div class="a" style="left:453px;top:72.5px;width:70px;height:12.0px;background:#fff;border:1px solid #c9ccd0"></div>
<div class="a" style="left:511.5px;top:73.5px;width:10.5px;height:10.0px;background:#eef0f3;border-left:1px solid #c9ccd0"></div>
<svg class="a" style="left:513.25px;top:75.5px" width="8" height="6" viewBox="0 0 8 6"><path d="M1.5 1.8 L4 4.3 L6.5 1.8" fill="none" stroke="#1f4e8c" stroke-width="1.5"/></svg>
<div class="t" style="left:458px;top:74.5px;font-size:7.8px;color:#555">Custom</div>
<div class="t" style="left:535.5px;top:74.5px;font-size:7.8px;color:#fff">Start</div>
<div class="a" style="left:565px;top:72.5px;width:51px;height:12px;background:#fff;border:1px solid #c9ccd0"></div>
<div class="t" style="left:569px;top:74.5px;font-size:7.8px;color:#555">1/1/2015</div>
<div class="t" style="left:635.5px;top:74.5px;font-size:7.8px;color:#fff">End</div>
<div class="a" style="left:662px;top:72.5px;width:50.5px;height:12px;background:#fff;border:1px solid #c9ccd0"></div>
<div class="t" style="left:666px;top:74.5px;font-size:7.8px;color:#555">5/30/2015</div>
<svg class="a" style="left:604px;top:74px" width="8" height="8" viewBox="0 0 8 8"><rect x="0.5" y="1" width="7" height="6.5" fill="#b8c6d6" stroke="#8ea2b8" stroke-width="0.8"/><rect x="0.5" y="1" width="7" height="1.6" fill="#6f8aa8"/><path d="M2.5 2.6V7.5M4 2.6V7.5M5.5 2.6V7.5M0.5 4.2H7.5M0.5 5.8H7.5" stroke="#fff" stroke-width="0.4"/></svg>
<svg class="a" style="left:701px;top:74px" width="8" height="8" viewBox="0 0 8 8"><rect x="0.5" y="1" width="7" height="6.5" fill="#b8c6d6" stroke="#8ea2b8" stroke-width="0.8"/><rect x="0.5" y="1" width="7" height="1.6" fill="#6f8aa8"/><path d="M2.5 2.6V7.5M4 2.6V7.5M5.5 2.6V7.5M0.5 4.2H7.5M0.5 5.8H7.5" stroke="#fff" stroke-width="0.4"/></svg>
<div class="a" style="left:728px;top:72.5px;width:69.5px;height:12.0px;background:#fff;border:1px solid #c9ccd0"></div>
<div class="a" style="left:786px;top:73.5px;width:10.5px;height:10.0px;background:#eef0f3;border-left:1px solid #c9ccd0"></div>
<svg class="a" style="left:787.75px;top:75.5px" width="8" height="6" viewBox="0 0 8 6"><path d="M1.5 1.8 L4 4.3 L6.5 1.8" fill="none" stroke="#1f4e8c" stroke-width="1.5"/></svg>
<div class="t" style="left:733px;top:74.5px;font-size:7.8px;color:#555">All Affiliates</div>
<div class="a" style="left:805px;top:72.5px;width:69.5px;height:12.0px;background:#fff;border:1px solid #c9ccd0"></div>
<div class="a" style="left:863.5px;top:73.5px;width:10.0px;height:10.0px;background:#eef0f3;border-left:1px solid #c9ccd0"></div>
<svg class="a" style="left:865.0px;top:75.5px" width="8" height="6" viewBox="0 0 8 6"><path d="M1.5 1.8 L4 4.3 L6.5 1.8" fill="none" stroke="#1f4e8c" stroke-width="1.5"/></svg>
<div class="t" style="left:810px;top:74.5px;font-size:7.8px;color:#555">All Offers</div>
<div class="a" style="left:892px;top:71px;width:39.5px;height:15px;background:#0d9ddf;border-radius:8px;color:#fff;font-size:8px;line-height:15px;text-align:center">Filter</div>
<div class="a" style="left:935px;top:71px;width:46px;height:15px;background:#0d9ddf;border-radius:8px;color:#fff;font-size:8px;line-height:15px;text-align:center">Export</div>
<div class="a" style="left:991.5px;top:73px;width:12px;height:10px;background:#fff"></div>
<svg class="a" style="left:993px;top:73.5px" width="8" height="9" viewBox="0 0 8 9"><path d="M1 8 L1.5 6 L6 1.5 L7.5 3 L3 7.5 Z" fill="#555"/></svg>
<svg class="a" style="left:183px;top:105.75px" width="28" height="12" viewBox="0 0 28 12"><rect x="1.2" y="1.9" width="9.6" height="5.2" rx="0.6" fill="#d6d6dc" stroke="#aeaeb6" stroke-width="0.7"/><rect x="2" y="2.6" width="8" height="1.4" fill="#ececf0"/><path d="M4.6 5.9 H8.2 V4.1 L12 7.2 L8.2 10.3 V8.5 H4.6 Z" fill="#5cb347" stroke="#3f8f30" stroke-width="0.6" stroke-linejoin="round"/><rect x="16" y="1.9" width="10" height="5.2" rx="0.6" fill="#d8d8de" stroke="#b0b0b8" stroke-width="0.7"/><path d="M17.6 8.3 L18.6 5.6 L24.6 0.5 L26.6 2.5 L20.6 7.6 Z" fill="#f4d258" stroke="#dca235" stroke-width="0.6" stroke-linejoin="round"/></svg>
<svg class="a" style="left:183px;top:118.25px" width="28" height="12" viewBox="0 0 28 12"><rect x="1.2" y="1.9" width="9.6" height="5.2" rx="0.6" fill="#d6d6dc" stroke="#aeaeb6" stroke-width="0.7"/><rect x="2" y="2.6" width="8" height="1.4" fill="#ececf0"/><path d="M4.6 5.9 H8.2 V4.1 L12 7.2 L8.2 10.3 V8.5 H4.6 Z" fill="#5cb347" stroke="#3f8f30" stroke-width="0.6" stroke-linejoin="round"/><rect x="16" y="1.9" width="10" height="5.2" rx="0.6" fill="#d8d8de" stroke="#b0b0b8" stroke-width="0.7"/><path d="M17.6 8.3 L18.6 5.6 L24.6 0.5 L26.6 2.5 L20.6 7.6 Z" fill="#f4d258" stroke="#dca235" stroke-width="0.6" stroke-linejoin="round"/></svg>
<svg class="a" style="left:183px;top:130.75px" width="28" height="12" viewBox="0 0 28 12"><rect x="1.2" y="1.9" width="9.6" height="5.2" rx="0.6" fill="#d6d6dc" stroke="#aeaeb6" stroke-width="0.7"/><rect x="2" y="2.6" width="8" height="1.4" fill="#ececf0"/><path d="M4.6 5.9 H8.2 V4.1 L12 7.2 L8.2 10.3 V8.5 H4.6 Z" fill="#5cb347" stroke="#3f8f30" stroke-width="0.6" stroke-linejoin="round"/><rect x="16" y="1.9" width="10" height="5.2" rx="0.6" fill="#d8d8de" stroke="#b0b0b8" stroke-width="0.7"/><path d="M17.6 8.3 L18.6 5.6 L24.6 0.5 L26.6 2.5 L20.6 7.6 Z" fill="#f4d258" stroke="#dca235" stroke-width="0.6" stroke-linejoin="round"/></svg>
<svg class="a" style="left:183px;top:143.25px" width="28" height="12" viewBox="0 0 28 12"><rect x="1.2" y="1.9" width="9.6" height="5.2" rx="0.6" fill="#d6d6dc" stroke="#aeaeb6" stroke-width="0.7"/><rect x="2" y="2.6" width="8" height="1.4" fill="#ececf0"/><path d="M4.6 5.9 H8.2 V4.1 L12 7.2 L8.2 10.3 V8.5 H4.6 Z" fill="#5cb347" stroke="#3f8f30" stroke-width="0.6" stroke-linejoin="round"/><rect x="16" y="1.9" width="10" height="5.2" rx="0.6" fill="#d8d8de" stroke="#b0b0b8" stroke-width="0.7"/><path d="M17.6 8.3 L18.6 5.6 L24.6 0.5 L26.6 2.5 L20.6 7.6 Z" fill="#f4d258" stroke="#dca235" stroke-width="0.6" stroke-linejoin="round"/></svg>
<svg class="a" style="left:183px;top:155.75px" width="28" height="12" viewBox="0 0 28 12"><rect x="1.2" y="1.9" width="9.6" height="5.2" rx="0.6" fill="#d6d6dc" stroke="#aeaeb6" stroke-width="0.7"/><rect x="2" y="2.6" width="8" height="1.4" fill="#ececf0"/><path d="M4.6 5.9 H8.2 V4.1 L12 7.2 L8.2 10.3 V8.5 H4.6 Z" fill="#5cb347" stroke="#3f8f30" stroke-width="0.6" stroke-linejoin="round"/><rect x="16" y="1.9" width="10" height="5.2" rx="0.6" fill="#d8d8de" stroke="#b0b0b8" stroke-width="0.7"/><path d="M17.6 8.3 L18.6 5.6 L24.6 0.5 L26.6 2.5 L20.6 7.6 Z" fill="#f4d258" stroke="#dca235" stroke-width="0.6" stroke-linejoin="round"/></svg>
<svg class="a" style="left:183px;top:168.25px" width="28" height="12" viewBox="0 0 28 12"><rect x="1.2" y="1.9" width="9.6" height="5.2" rx="0.6" fill="#d6d6dc" stroke="#aeaeb6" stroke-width="0.7"/><rect x="2" y="2.6" width="8" height="1.4" fill="#ececf0"/><path d="M4.6 5.9 H8.2 V4.1 L12 7.2 L8.2 10.3 V8.5 H4.6 Z" fill="#5cb347" stroke="#3f8f30" stroke-width="0.6" stroke-linejoin="round"/><rect x="16" y="1.9" width="10" height="5.2" rx="0.6" fill="#d8d8de" stroke="#b0b0b8" stroke-width="0.7"/><path d="M17.6 8.3 L18.6 5.6 L24.6 0.5 L26.6 2.5 L20.6 7.6 Z" fill="#f4d258" stroke="#dca235" stroke-width="0.6" stroke-linejoin="round"/></svg>
<svg class="a" style="left:183px;top:180.75px" width="28" height="12" viewBox="0 0 28 12"><rect x="1.2" y="1.9" width="9.6" height="5.2" rx="0.6" fill="#d6d6dc" stroke="#aeaeb6" stroke-width="0.7"/><rect x="2" y="2.6" width="8" height="1.4" fill="#ececf0"/><path d="M4.6 5.9 H8.2 V4.1 L12 7.2 L8.2 10.3 V8.5 H4.6 Z" fill="#5cb347" stroke="#3f8f30" stroke-width="0.6" stroke-linejoin="round"/><rect x="16" y="1.9" width="10" height="5.2" rx="0.6" fill="#d8d8de" stroke="#b0b0b8" stroke-width="0.7"/><path d="M17.6 8.3 L18.6 5.6 L24.6 0.5 L26.6 2.5 L20.6 7.6 Z" fill="#f4d258" stroke="#dca235" stroke-width="0.6" stroke-linejoin="round"/></svg>
<svg class="a" style="left:183px;top:193.25px" width="28" height="12" viewBox="0 0 28 12"><rect x="1.2" y="1.9" width="9.6" height="5.2" rx="0.6" fill="#d6d6dc" stroke="#aeaeb6" stroke-width="0.7"/><rect x="2" y="2.6" width="8" height="1.4" fill="#ececf0"/><path d="M4.6 5.9 H8.2 V4.1 L12 7.2 L8.2 10.3 V8.5 H4.6 Z" fill="#5cb347" stroke="#3f8f30" stroke-width="0.6" stroke-linejoin="round"/><rect x="16" y="1.9" width="10" height="5.2" rx="0.6" fill="#d8d8de" stroke="#b0b0b8" stroke-width="0.7"/><path d="M17.6 8.3 L18.6 5.6 L24.6 0.5 L26.6 2.5 L20.6 7.6 Z" fill="#f4d258" stroke="#dca235" stroke-width="0.6" stroke-linejoin="round"/></svg>
<svg class="a" style="left:183px;top:205.75px" width="28" height="12" viewBox="0 0 28 12"><rect x="1.2" y="1.9" width="9.6" height="5.2" rx="0.6" fill="#d6d6dc" stroke="#aeaeb6" stroke-width="0.7"/><rect x="2" y="2.6" width="8" height="1.4" fill="#ececf0"/><path d="M4.6 5.9 H8.2 V4.1 L12 7.2 L8.2 10.3 V8.5 H4.6 Z" fill="#5cb347" stroke="#3f8f30" stroke-width="0.6" stroke-linejoin="round"/><rect x="16" y="1.9" width="10" height="5.2" rx="0.6" fill="#d8d8de" stroke="#b0b0b8" stroke-width="0.7"/><path d="M17.6 8.3 L18.6 5.6 L24.6 0.5 L26.6 2.5 L20.6 7.6 Z" fill="#f4d258" stroke="#dca235" stroke-width="0.6" stroke-linejoin="round"/></svg>
<svg class="a" style="left:183px;top:218.25px" width="28" height="12" viewBox="0 0 28 12"><rect x="1.2" y="1.9" width="9.6" height="5.2" rx="0.6" fill="#d6d6dc" stroke="#aeaeb6" stroke-width="0.7"/><rect x="2" y="2.6" width="8" height="1.4" fill="#ececf0"/><path d="M4.6 5.9 H8.2 V4.1 L12 7.2 L8.2 10.3 V8.5 H4.6 Z" fill="#5cb347" stroke="#3f8f30" stroke-width="0.6" stroke-linejoin="round"/><rect x="16" y="1.9" width="10" height="5.2" rx="0.6" fill="#d8d8de" stroke="#b0b0b8" stroke-width="0.7"/><path d="M17.6 8.3 L18.6 5.6 L24.6 0.5 L26.6 2.5 L20.6 7.6 Z" fill="#f4d258" stroke="#dca235" stroke-width="0.6" stroke-linejoin="round"/></svg>
<svg class="a" style="left:183px;top:230.75px" width="28" height="12" viewBox="0 0 28 12"><rect x="1.2" y="1.9" width="9.6" height="5.2" rx="0.6" fill="#d6d6dc" stroke="#aeaeb6" stroke-width="0.7"/><rect x="2" y="2.6" width="8" height="1.4" fill="#ececf0"/><path d="M4.6 5.9 H8.2 V4.1 L12 7.2 L8.2 10.3 V8.5 H4.6 Z" fill="#5cb347" stroke="#3f8f30" stroke-width="0.6" stroke-linejoin="round"/><rect x="16" y="1.9" width="10" height="5.2" rx="0.6" fill="#d8d8de" stroke="#b0b0b8" stroke-width="0.7"/><path d="M17.6 8.3 L18.6 5.6 L24.6 0.5 L26.6 2.5 L20.6 7.6 Z" fill="#f4d258" stroke="#dca235" stroke-width="0.6" stroke-linejoin="round"/></svg>
<svg class="a" style="left:183px;top:243.25px" width="28" height="12" viewBox="0 0 28 12"><rect x="1.2" y="1.9" width="9.6" height="5.2" rx="0.6" fill="#d6d6dc" stroke="#aeaeb6" stroke-width="0.7"/><rect x="2" y="2.6" width="8" height="1.4" fill="#ececf0"/><path d="M4.6 5.9 H8.2 V4.1 L12 7.2 L8.2 10.3 V8.5 H4.6 Z" fill="#5cb347" stroke="#3f8f30" stroke-width="0.6" stroke-linejoin="round"/><rect x="16" y="1.9" width="10" height="5.2" rx="0.6" fill="#d8d8de" stroke="#b0b0b8" stroke-width="0.7"/><path d="M17.6 8.3 L18.6 5.6 L24.6 0.5 L26.6 2.5 L20.6 7.6 Z" fill="#f4d258" stroke="#dca235" stroke-width="0.6" stroke-linejoin="round"/></svg>
<svg class="a" style="left:183px;top:255.75px" width="28" height="12" viewBox="0 0 28 12"><rect x="1.2" y="1.9" width="9.6" height="5.2" rx="0.6" fill="#d6d6dc" stroke="#aeaeb6" stroke-width="0.7"/><rect x="2" y="2.6" width="8" height="1.4" fill="#ececf0"/><path d="M4.6 5.9 H8.2 V4.1 L12 7.2 L8.2 10.3 V8.5 H4.6 Z" fill="#5cb347" stroke="#3f8f30" stroke-width="0.6" stroke-linejoin="round"/><rect x="16" y="1.9" width="10" height="5.2" rx="0.6" fill="#d8d8de" stroke="#b0b0b8" stroke-width="0.7"/><path d="M17.6 8.3 L18.6 5.6 L24.6 0.5 L26.6 2.5 L20.6 7.6 Z" fill="#f4d258" stroke="#dca235" stroke-width="0.6" stroke-linejoin="round"/></svg>
<svg class="a" style="left:183px;top:268.25px" width="28" height="12" viewBox="0 0 28 12"><rect x="1.2" y="1.9" width="9.6" height="5.2" rx="0.6" fill="#d6d6dc" stroke="#aeaeb6" stroke-width="0.7"/><rect x="2" y="2.6" width="8" height="1.4" fill="#ececf0"/><path d="M4.6 5.9 H8.2 V4.1 L12 7.2 L8.2 10.3 V8.5 H4.6 Z" fill="#5cb347" stroke="#3f8f30" stroke-width="0.6" stroke-linejoin="round"/><rect x="16" y="1.9" width="10" height="5.2" rx="0.6" fill="#d8d8de" stroke="#b0b0b8" stroke-width="0.7"/><path d="M17.6 8.3 L18.6 5.6 L24.6 0.5 L26.6 2.5 L20.6 7.6 Z" fill="#f4d258" stroke="#dca235" stroke-width="0.6" stroke-linejoin="round"/></svg>
<svg class="a" style="left:183px;top:280.75px" width="28" height="12" viewBox="0 0 28 12"><rect x="1.2" y="1.9" width="9.6" height="5.2" rx="0.6" fill="#d6d6dc" stroke="#aeaeb6" stroke-width="0.7"/><rect x="2" y="2.6" width="8" height="1.4" fill="#ececf0"/><path d="M4.6 5.9 H8.2 V4.1 L12 7.2 L8.2 10.3 V8.5 H4.6 Z" fill="#5cb347" stroke="#3f8f30" stroke-width="0.6" stroke-linejoin="round"/><rect x="16" y="1.9" width="10" height="5.2" rx="0.6" fill="#d8d8de" stroke="#b0b0b8" stroke-width="0.7"/><path d="M17.6 8.3 L18.6 5.6 L24.6 0.5 L26.6 2.5 L20.6 7.6 Z" fill="#f4d258" stroke="#dca235" stroke-width="0.6" stroke-linejoin="round"/></svg>
<svg class="a" style="left:183px;top:293.25px" width="28" height="12" viewBox="0 0 28 12"><rect x="1.2" y="1.9" width="9.6" height="5.2" rx="0.6" fill="#d6d6dc" stroke="#aeaeb6" stroke-width="0.7"/><rect x="2" y="2.6" width="8" height="1.4" fill="#ececf0"/><path d="M4.6 5.9 H8.2 V4.1 L12 7.2 L8.2 10.3 V8.5 H4.6 Z" fill="#5cb347" stroke="#3f8f30" stroke-width="0.6" stroke-linejoin="round"/><rect x="16" y="1.9" width="10" height="5.2" rx="0.6" fill="#d8d8de" stroke="#b0b0b8" stroke-width="0.7"/><path d="M17.6 8.3 L18.6 5.6 L24.6 0.5 L26.6 2.5 L20.6 7.6 Z" fill="#f4d258" stroke="#dca235" stroke-width="0.6" stroke-linejoin="round"/></svg>
<svg class="a" style="left:183px;top:305.75px" width="28" height="12" viewBox="0 0 28 12"><rect x="1.2" y="1.9" width="9.6" height="5.2" rx="0.6" fill="#d6d6dc" stroke="#aeaeb6" stroke-width="0.7"/><rect x="2" y="2.6" width="8" height="1.4" fill="#ececf0"/><path d="M4.6 5.9 H8.2 V4.1 L12 7.2 L8.2 10.3 V8.5 H4.6 Z" fill="#5cb347" stroke="#3f8f30" stroke-width="0.6" stroke-linejoin="round"/><rect x="16" y="1.9" width="10" height="5.2" rx="0.6" fill="#d8d8de" stroke="#b0b0b8" stroke-width="0.7"/><path d="M17.6 8.3 L18.6 5.6 L24.6 0.5 L26.6 2.5 L20.6 7.6 Z" fill="#f4d258" stroke="#dca235" stroke-width="0.6" stroke-linejoin="round"/></svg>
<svg class="a" style="left:183px;top:318.25px" width="28" height="12" viewBox="0 0 28 12"><rect x="1.2" y="1.9" width="9.6" height="5.2" rx="0.6" fill="#d6d6dc" stroke="#aeaeb6" stroke-width="0.7"/><rect x="2" y="2.6" width="8" height="1.4" fill="#ececf0"/><path d="M4.6 5.9 H8.2 V4.1 L12 7.2 L8.2 10.3 V8.5 H4.6 Z" fill="#5cb347" stroke="#3f8f30" stroke-width="0.6" stroke-linejoin="round"/><rect x="16" y="1.9" width="10" height="5.2" rx="0.6" fill="#d8d8de" stroke="#b0b0b8" stroke-width="0.7"/><path d="M17.6 8.3 L18.6 5.6 L24.6 0.5 L26.6 2.5 L20.6 7.6 Z" fill="#f4d258" stroke="#dca235" stroke-width="0.6" stroke-linejoin="round"/></svg>
<svg class="a" style="left:183px;top:330.75px" width="28" height="12" viewBox="0 0 28 12"><rect x="1.2" y="1.9" width="9.6" height="5.2" rx="0.6" fill="#d6d6dc" stroke="#aeaeb6" stroke-width="0.7"/><rect x="2" y="2.6" width="8" height="1.4" fill="#ececf0"/><path d="M4.6 5.9 H8.2 V4.1 L12 7.2 L8.2 10.3 V8.5 H4.6 Z" fill="#5cb347" stroke="#3f8f30" stroke-width="0.6" stroke-linejoin="round"/><rect x="16" y="1.9" width="10" height="5.2" rx="0.6" fill="#d8d8de" stroke="#b0b0b8" stroke-width="0.7"/><path d="M17.6 8.3 L18.6 5.6 L24.6 0.5 L26.6 2.5 L20.6 7.6 Z" fill="#f4d258" stroke="#dca235" stroke-width="0.6" stroke-linejoin="round"/></svg>
<svg class="a" style="left:183px;top:343.25px" width="28" height="12" viewBox="0 0 28 12"><rect x="1.2" y="1.9" width="9.6" height="5.2" rx="0.6" fill="#d6d6dc" stroke="#aeaeb6" stroke-width="0.7"/><rect x="2" y="2.6" width="8" height="1.4" fill="#ececf0"/><path d="M4.6 5.9 H8.2 V4.1 L12 7.2 L8.2 10.3 V8.5 H4.6 Z" fill="#5cb347" stroke="#3f8f30" stroke-width="0.6" stroke-linejoin="round"/><rect x="16" y="1.9" width="10" height="5.2" rx="0.6" fill="#d8d8de" stroke="#b0b0b8" stroke-width="0.7"/><path d="M17.6 8.3 L18.6 5.6 L24.6 0.5 L26.6 2.5 L20.6 7.6 Z" fill="#f4d258" stroke="#dca235" stroke-width="0.6" stroke-linejoin="round"/></svg>
<svg class="a" style="left:183px;top:355.75px" width="28" height="12" viewBox="0 0 28 12"><rect x="1.2" y="1.9" width="9.6" height="5.2" rx="0.6" fill="#d6d6dc" stroke="#aeaeb6" stroke-width="0.7"/><rect x="2" y="2.6" width="8" height="1.4" fill="#ececf0"/><path d="M4.6 5.9 H8.2 V4.1 L12 7.2 L8.2 10.3 V8.5 H4.6 Z" fill="#5cb347" stroke="#3f8f30" stroke-width="0.6" stroke-linejoin="round"/><rect x="16" y="1.9" width="10" height="5.2" rx="0.6" fill="#d8d8de" stroke="#b0b0b8" stroke-width="0.7"/><path d="M17.6 8.3 L18.6 5.6 L24.6 0.5 L26.6 2.5 L20.6 7.6 Z" fill="#f4d258" stroke="#dca235" stroke-width="0.6" stroke-linejoin="round"/></svg>
<svg class="a" style="left:183px;top:368.25px" width="28" height="12" viewBox="0 0 28 12"><rect x="1.2" y="1.9" width="9.6" height="5.2" rx="0.6" fill="#d6d6dc" stroke="#aeaeb6" stroke-width="0.7"/><rect x="2" y="2.6" width="8" height="1.4" fill="#ececf0"/><path d="M4.6 5.9 H8.2 V4.1 L12 7.2 L8.2 10.3 V8.5 H4.6 Z" fill="#5cb347" stroke="#3f8f30" stroke-width="0.6" stroke-linejoin="round"/><rect x="16" y="1.9" width="10" height="5.2" rx="0.6" fill="#d8d8de" stroke="#b0b0b8" stroke-width="0.7"/><path d="M17.6 8.3 L18.6 5.6 L24.6 0.5 L26.6 2.5 L20.6 7.6 Z" fill="#f4d258" stroke="#dca235" stroke-width="0.6" stroke-linejoin="round"/></svg>
<svg class="a" style="left:183px;top:380.75px" width="28" height="12" viewBox="0 0 28 12"><rect x="1.2" y="1.9" width="9.6" height="5.2" rx="0.6" fill="#d6d6dc" stroke="#aeaeb6" stroke-width="0.7"/><rect x="2" y="2.6" width="8" height="1.4" fill="#ececf0"/><path d="M4.6 5.9 H8.2 V4.1 L12 7.2 L8.2 10.3 V8.5 H4.6 Z" fill="#5cb347" stroke="#3f8f30" stroke-width="0.6" stroke-linejoin="round"/><rect x="16" y="1.9" width="10" height="5.2" rx="0.6" fill="#d8d8de" stroke="#b0b0b8" stroke-width="0.7"/><path d="M17.6 8.3 L18.6 5.6 L24.6 0.5 L26.6 2.5 L20.6 7.6 Z" fill="#f4d258" stroke="#dca235" stroke-width="0.6" stroke-linejoin="round"/></svg>
<svg class="a" style="left:183px;top:393.25px" width="28" height="12" viewBox="0 0 28 12"><rect x="1.2" y="1.9" width="9.6" height="5.2" rx="0.6" fill="#d6d6dc" stroke="#aeaeb6" stroke-width="0.7"/><rect x="2" y="2.6" width="8" height="1.4" fill="#ececf0"/><path d="M4.6 5.9 H8.2 V4.1 L12 7.2 L8.2 10.3 V8.5 H4.6 Z" fill="#5cb347" stroke="#3f8f30" stroke-width="0.6" stroke-linejoin="round"/><rect x="16" y="1.9" width="10" height="5.2" rx="0.6" fill="#d8d8de" stroke="#b0b0b8" stroke-width="0.7"/><path d="M17.6 8.3 L18.6 5.6 L24.6 0.5 L26.6 2.5 L20.6 7.6 Z" fill="#f4d258" stroke="#dca235" stroke-width="0.6" stroke-linejoin="round"/></svg>
<svg class="a" style="left:183px;top:405.75px" width="28" height="12" viewBox="0 0 28 12"><rect x="1.2" y="1.9" width="9.6" height="5.2" rx="0.6" fill="#d6d6dc" stroke="#aeaeb6" stroke-width="0.7"/><rect x="2" y="2.6" width="8" height="1.4" fill="#ececf0"/><path d="M4.6 5.9 H8.2 V4.1 L12 7.2 L8.2 10.3 V8.5 H4.6 Z" fill="#5cb347" stroke="#3f8f30" stroke-width="0.6" stroke-linejoin="round"/><rect x="16" y="1.9" width="10" height="5.2" rx="0.6" fill="#d8d8de" stroke="#b0b0b8" stroke-width="0.7"/><path d="M17.6 8.3 L18.6 5.6 L24.6 0.5 L26.6 2.5 L20.6 7.6 Z" fill="#f4d258" stroke="#dca235" stroke-width="0.6" stroke-linejoin="round"/></svg>
<svg class="a" style="left:183px;top:418.25px" width="28" height="12" viewBox="0 0 28 12"><rect x="1.2" y="1.9" width="9.6" height="5.2" rx="0.6" fill="#d6d6dc" stroke="#aeaeb6" stroke-width="0.7"/><rect x="2" y="2.6" width="8" height="1.4" fill="#ececf0"/><path d="M4.6 5.9 H8.2 V4.1 L12 7.2 L8.2 10.3 V8.5 H4.6 Z" fill="#5cb347" stroke="#3f8f30" stroke-width="0.6" stroke-linejoin="round"/><rect x="16" y="1.9" width="10" height="5.2" rx="0.6" fill="#d8d8de" stroke="#b0b0b8" stroke-width="0.7"/><path d="M17.6 8.3 L18.6 5.6 L24.6 0.5 L26.6 2.5 L20.6 7.6 Z" fill="#f4d258" stroke="#dca235" stroke-width="0.6" stroke-linejoin="round"/></svg>
<svg class="a" style="left:183px;top:430.75px" width="28" height="12" viewBox="0 0 28 12"><rect x="1.2" y="1.9" width="9.6" height="5.2" rx="0.6" fill="#d6d6dc" stroke="#aeaeb6" stroke-width="0.7"/><rect x="2" y="2.6" width="8" height="1.4" fill="#ececf0"/><path d="M4.6 5.9 H8.2 V4.1 L12 7.2 L8.2 10.3 V8.5 H4.6 Z" fill="#5cb347" stroke="#3f8f30" stroke-width="0.6" stroke-linejoin="round"/><rect x="16" y="1.9" width="10" height="5.2" rx="0.6" fill="#d8d8de" stroke="#b0b0b8" stroke-width="0.7"/><path d="M17.6 8.3 L18.6 5.6 L24.6 0.5 L26.6 2.5 L20.6 7.6 Z" fill="#f4d258" stroke="#dca235" stroke-width="0.6" stroke-linejoin="round"/></svg>
<svg class="a" style="left:183px;top:443.25px" width="28" height="12" viewBox="0 0 28 12"><rect x="1.2" y="1.9" width="9.6" height="5.2" rx="0.6" fill="#d6d6dc" stroke="#aeaeb6" stroke-width="0.7"/><rect x="2" y="2.6" width="8" height="1.4" fill="#ececf0"/><path d="M4.6 5.9 H8.2 V4.1 L12 7.2 L8.2 10.3 V8.5 H4.6 Z" fill="#5cb347" stroke="#3f8f30" stroke-width="0.6" stroke-linejoin="round"/><rect x="16" y="1.9" width="10" height="5.2" rx="0.6" fill="#d8d8de" stroke="#b0b0b8" stroke-width="0.7"/><path d="M17.6 8.3 L18.6 5.6 L24.6 0.5 L26.6 2.5 L20.6 7.6 Z" fill="#f4d258" stroke="#dca235" stroke-width="0.6" stroke-linejoin="round"/></svg>
<svg class="a" style="left:183px;top:455.75px" width="28" height="12" viewBox="0 0 28 12"><rect x="1.2" y="1.9" width="9.6" height="5.2" rx="0.6" fill="#d6d6dc" stroke="#aeaeb6" stroke-width="0.7"/><rect x="2" y="2.6" width="8" height="1.4" fill="#ececf0"/><path d="M4.6 5.9 H8.2 V4.1 L12 7.2 L8.2 10.3 V8.5 H4.6 Z" fill="#5cb347" stroke="#3f8f30" stroke-width="0.6" stroke-linejoin="round"/><rect x="16" y="1.9" width="10" height="5.2" rx="0.6" fill="#d8d8de" stroke="#b0b0b8" stroke-width="0.7"/><path d="M17.6 8.3 L18.6 5.6 L24.6 0.5 L26.6 2.5 L20.6 7.6 Z" fill="#f4d258" stroke="#dca235" stroke-width="0.6" stroke-linejoin="round"/></svg>
<svg class="a" style="left:183px;top:468.25px" width="28" height="12" viewBox="0 0 28 12"><rect x="1.2" y="1.9" width="9.6" height="5.2" rx="0.6" fill="#d6d6dc" stroke="#aeaeb6" stroke-width="0.7"/><rect x="2" y="2.6" width="8" height="1.4" fill="#ececf0"/><path d="M4.6 5.9 H8.2 V4.1 L12 7.2 L8.2 10.3 V8.5 H4.6 Z" fill="#5cb347" stroke="#3f8f30" stroke-width="0.6" stroke-linejoin="round"/><rect x="16" y="1.9" width="10" height="5.2" rx="0.6" fill="#d8d8de" stroke="#b0b0b8" stroke-width="0.7"/><path d="M17.6 8.3 L18.6 5.6 L24.6 0.5 L26.6 2.5 L20.6 7.6 Z" fill="#f4d258" stroke="#dca235" stroke-width="0.6" stroke-linejoin="round"/></svg>
<div class="a" style="left:182.0px;top:570.2px;width:2.6px;height:2.6px;border-radius:1.3px;background:#333"></div>
<div class="a" style="left:227.0px;top:570.2px;width:2.6px;height:2.6px;border-radius:1.3px;background:#333"></div>
<div class="a" style="left:331.8px;top:570.2px;width:2.6px;height:2.6px;border-radius:1.3px;background:#333"></div>
<div class="a" style="left:469.3px;top:570.2px;width:2.6px;height:2.6px;border-radius:1.3px;background:#333"></div>
<div class="a" style="left:523.5px;top:570.2px;width:2.6px;height:2.6px;border-radius:1.3px;background:#333"></div>
<div class="a" style="left:577.2px;top:570.2px;width:2.6px;height:2.6px;border-radius:1.3px;background:#333"></div>
<div class="a" style="left:630.1px;top:570.2px;width:2.6px;height:2.6px;border-radius:1.3px;background:#333"></div>
<div class="a" style="left:683.4000000000001px;top:570.2px;width:2.6px;height:2.6px;border-radius:1.3px;background:#333"></div>
<div class="a" style="left:736.2px;top:570.2px;width:2.6px;height:2.6px;border-radius:1.3px;background:#333"></div>
<div class="a" style="left:789.1px;top:570.2px;width:2.6px;height:2.6px;border-radius:1.3px;background:#333"></div>
<div class="a" style="left:842.8000000000001px;top:570.2px;width:2.6px;height:2.6px;border-radius:1.3px;background:#333"></div>
<div class="t" style="right:58px;top:569px;font-size:7.6px;font-weight:bold;color:#333">$2,959.00</div>
<div class="t" style="right:5px;top:569px;font-size:7.6px;font-weight:bold;color:#333">$7,797.25</div>
<svg class="a" style="left:175px;top:585.8px" width="12" height="10" viewBox="0 0 12 10"><path d="M5 0.8 L1 5 L5 9.2 M10.5 0.8 L6.5 5 L10.5 9.2" fill="none" stroke="#a3a8ae" stroke-width="1.2"/></svg>
<svg class="a" style="left:198.5px;top:585.8px" width="7" height="10" viewBox="0 0 7 10"><path d="M5.5 0.8 L1.2 5 L5.5 9.2" fill="none" stroke="#a3a8ae" stroke-width="1.2"/></svg>
<div class="t" style="left:216.4px;top:587.1999999999999px;font-size:7.6px;color:#666">Page</div>
<div class="a" style="left:238px;top:584.8px;width:17.5px;height:12px;background:#fff;border:1px solid #c5c9ce"></div>
<div class="t" style="right:746.5px;top:587.1999999999999px;font-size:7.6px;color:#555">1</div>
<div class="t" style="left:258.6px;top:587.1999999999999px;font-size:7.6px;color:#666">of 28</div>
<svg class="a" style="left:287.2px;top:585.8px" width="7" height="10" viewBox="0 0 7 10"><path d="M1 0.8 L5.3 5 L1 9.2" fill="none" stroke="#a3a8ae" stroke-width="1.2"/></svg>
<svg class="a" style="left:305.8px;top:585.8px" width="12" height="10" viewBox="0 0 12 10"><path d="M1 0.8 L5 5 L1 9.2 M6.5 0.8 L10.5 5 L6.5 9.2" fill="none" stroke="#a3a8ae" stroke-width="1.2"/></svg>
<svg class="a" style="left:329.8px;top:585.3px" width="12" height="11" viewBox="0 0 12 11"><path d="M9.8 3.6 A4.5 4.5 0 1 0 10.2 7" fill="none" stroke="#a3a8ae" stroke-width="1.3"/><path d="M7.2 1 L10.4 3.6 L11.2 0" fill="none" stroke="#a3a8ae" stroke-width="1.1"/></svg>
<div class="t" style="left:347.2px;top:587.1999999999999px;font-size:7.6px;color:#666">Rows Per Page:</div>
<div class="a" style="left:405.4px;top:584.8px;width:27.5px;height:12.5px;background:#fff;border:1px solid #c5c9ce"></div>
<div class="a" style="left:420.9px;top:585.8px;width:11px;height:10.5px;background:#eef0f3;border-left:1px solid #c5c9ce"></div>
<svg class="a" style="left:422.4px;top:588.3px" width="8" height="6" viewBox="0 0 8 6"><path d="M1.5 1.8 L4 4.3 L6.5 1.8" fill="none" stroke="#1f4e8c" stroke-width="1.5"/></svg>
<div class="t" style="left:406.4px;top:587.1999999999999px;font-size:7.6px;color:#333">30</div>
<div class="t" style="left:909px;top:587.1999999999999px;font-size:7.6px;color:#666">Displaying Items 1 - 30 of 837</div>
<svg class="a" style="left:35px;top:10px" width="16" height="16" viewBox="0 0 16 16"><circle cx="6.2" cy="6.2" r="4.5" fill="none" stroke="#555" stroke-width="1.15"/><path d="M9.5 9.6 L14 13.8" stroke="#555" stroke-width="1.4"/></svg>
<div class="t" style="left:57.5px;top:11.5px;font-size:11px;font-style:italic;color:#aaa">search</div>
<svg class="a" style="left:972px;top:10px" width="18" height="16" viewBox="0 0 18 16"><path d="M1.5 4 V12.5 H8" fill="none" stroke="#777" stroke-width="0.8"/><path d="M14.5 4 V8" fill="none" stroke="#777" stroke-width="0.8"/><rect x="1.2" y="2.6" width="13.6" height="1.6" fill="#444"/><circle cx="12" cy="11.5" r="3.2" fill="#fff" stroke="#666" stroke-width="0.9"/><path d="M10.9 10.4 L13.1 12.6 M13.1 10.4 L10.9 12.6" stroke="#666" stroke-width="0.7"/></svg>
<svg class="a" style="left:7px;top:45px" width="15" height="15" viewBox="0 0 15 15"><path d="M1.6 1.7 V13.1 H13.7" fill="none" stroke="#fff" stroke-width="1.3"/><path d="M2 5.4 L4.9 10 L7.4 6.7 L9.5 10 L12.8 2" fill="none" stroke="#fff" stroke-width="1.15"/><path d="M2 9.2 L4.6 5.6 L8.2 9.8 L12.5 5.8" fill="none" stroke="#fff" stroke-width="0.8"/></svg>
<svg class="a" style="left:7px;top:74px" width="15" height="15" viewBox="0 0 15 15"><rect x="1" y="1.4" width="12.7" height="2.5" fill="#a39e9c"/><rect x="1.4" y="6.9" width="4.8" height="2.2" fill="none" stroke="#a39e9c" stroke-width="0.8"/><rect x="8.4" y="6.9" width="4.9" height="2.2" fill="none" stroke="#a39e9c" stroke-width="0.8"/><rect x="1.4" y="11.2" width="2.6" height="2.5" fill="none" stroke="#a39e9c" stroke-width="0.8"/><rect x="5.9" y="11.2" width="2.6" height="2.5" fill="none" stroke="#a39e9c" stroke-width="0.8"/><rect x="10.5" y="11.2" width="2.8" height="2.5" fill="none" stroke="#a39e9c" stroke-width="0.8"/></svg>
<svg class="a" style="left:6px;top:102px" width="16" height="16" viewBox="0 0 16 16"><path d="M1.8 5.6 L6 5.6 L13.2 1.8 L13.2 12.6 L6 9.6 L1.8 9.6 Z" fill="#a39e9c"/><path d="M5.2 9.2 L6.6 14 L8.2 13.6 L7.4 9.6 Z" fill="#a39e9c"/><ellipse cx="10.6" cy="7.2" rx="1.3" ry="2" fill="#5b504e"/></svg>
<svg class="a" style="left:6px;top:132px" width="16" height="16" viewBox="0 0 16 16"><path d="M7.6 2.4 L4 6 A3.5 3.5 0 0 0 9 11 L12.6 7.4" fill="none" stroke="#a39e9c" stroke-width="2.3"/><path d="M7.6 2.4 L6.4 3.6 M12.6 7.4 L11.4 8.6" stroke="#8d8785" stroke-width="2.4"/></svg>
<svg class="a" style="left:8px;top:161px" width="13" height="15" viewBox="0 0 13 15"><rect x="1.6" y="1" width="9.4" height="13" fill="none" stroke="#a39e9c" stroke-width="1.1"/><rect x="2.2" y="1.5" width="8.2" height="2.8" fill="#a39e9c"/><path d="M2.2 4.6 H10.4 M2 7.6 H10.6 M2 10.6 H10.6 M4.9 4.4 V13.6 M7.7 4.4 V13.6" stroke="#a39e9c" stroke-width="0.9"/></svg>
<svg class="a" style="left:3px;top:559px" width="22" height="22" viewBox="0 0 22 22"><circle cx="11.3" cy="11.3" r="10.2" fill="#fff"/><clipPath id="cp"><circle cx="11.3" cy="11.3" r="9.2"/></clipPath><g clip-path="url(#cp)" fill="#56769a"><ellipse cx="11.2" cy="8.6" rx="3.3" ry="4.3"/><path d="M9.6 12 L12.8 12 L13 14.2 Q17.5 15 18.6 19.2 L18.6 22 L3.8 22 L3.8 19.2 Q4.9 15 9.4 14.2 Z"/></g></svg>
<svg class="a" style="left:7px;top:591px" width="15" height="15" viewBox="0 0 15 15"><circle cx="6.3" cy="4.3" r="2.1" fill="none" stroke="#a39e9c" stroke-width="1.1"/><circle cx="3.1" cy="9" r="2.1" fill="none" stroke="#a39e9c" stroke-width="1.1"/><circle cx="9.2" cy="10.5" r="2.6" fill="none" stroke="#a39e9c" stroke-width="1.1"/></svg>
<div class="a" style="left:293px;top:198px;width:668px;height:357px;background:#f5f6f8;box-shadow:0 3px 16px rgba(0,0,0,0.42)"></div>
<div class="a" style="left:293px;top:198px;width:668px;height:21px;background:#0a97d8"></div>
<div class="t" style="left:599.5px;top:203.5px;font-size:10px;font-weight:bold;color:#fff">Lead - TWO</div>
<svg class="a" style="left:943.5px;top:204.5px" width="9" height="9" viewBox="0 0 9 9"><path d="M1.2 1.2 L7.8 7.8 M7.8 1.2 L1.2 7.8" stroke="#fff" stroke-width="2"/></svg>
<div class="a" style="left:922.5px;top:226px;width:31.5px;height:12.5px;background:#fff;border:1px solid #3aa8e0;color:#2a9fd8;font-size:8.6px;font-weight:bold;line-height:10.5px;text-align:center">Lead</div>
<div class="a" style="left:303px;top:228px;width:73.5px;height:19.5px;background:#eceef1;border-left:1px solid #d5d9dd;border-top:1px solid #d5d9dd;color:#555;font-size:7.7px;font-weight:bold;line-height:19px;text-align:center">Lead Information</div>
<div class="a" style="left:376.5px;top:228px;width:56.0px;height:19.5px;background:#eceef1;border-left:1px solid #d5d9dd;border-top:1px solid #d5d9dd;color:#555;font-size:7.7px;font-weight:bold;line-height:19px;text-align:center">Dispositions</div>
<div class="a" style="left:432.5px;top:228px;width:36.0px;height:19.5px;background:#fff;border-left:1px solid #d5d9dd;border-top:1px solid #d5d9dd;color:#555;font-size:7.7px;font-weight:bold;line-height:19px;text-align:center">Buyers</div>
<div class="a" style="left:468.5px;top:228px;width:55.0px;height:19.5px;background:#eceef1;border-left:1px solid #d5d9dd;border-top:1px solid #d5d9dd;color:#555;font-size:7.7px;font-weight:bold;line-height:19px;text-align:center">Lead Status</div>
<div class="a" style="left:523.5px;top:228px;width:37.0px;height:19.5px;background:#eceef1;border-left:1px solid #d5d9dd;border-top:1px solid #d5d9dd;border-right:1px solid #d5d9dd;color:#555;font-size:7.7px;font-weight:bold;line-height:19px;text-align:center">History</div>
<div class="a" style="left:303px;top:247px;width:649px;height:21px;background:#4a4e55"></div>
<div class="a" style="left:313.5px;top:251.5px;width:140.5px;height:11.5px;background:#fff;border:1px solid #c9ccd0"></div>
<div class="t" style="left:317px;top:253.5px;font-size:7.7px;color:#666">Search for Buyer or Buyer Contract ...</div>
<div class="a" style="left:762px;top:251px;width:126px;height:12.5px;background:#fff;border:1px solid #c9ccd0"></div>
<div class="a" style="left:875px;top:252px;width:12px;height:10.5px;background:#eef0f3;border-left:1px solid #c9ccd0"></div>
<svg class="a" style="left:877.5px;top:254.25px" width="8" height="6" viewBox="0 0 8 6"><path d="M1.5 1.8 L4 4.3 L6.5 1.8" fill="none" stroke="#1f4e8c" stroke-width="1.5"/></svg>
<div class="t" style="left:767px;top:253.25px;font-size:7.8px;color:#555">All Dispositions</div>
<div class="a" style="left:899px;top:250px;width:45px;height:15px;background:#0d9ddf;border-radius:8px;color:#fff;font-size:8px;line-height:15px;text-align:center">Export</div>
<div class="a" style="left:303px;top:268px;width:649px;height:274.5px;background:#fff;border:1px solid #e2e5e8;border-top:none"></div>
<div class="a" style="left:303px;top:268px;width:648px;height:15.5px;background:#e8ebee;border-bottom:1px solid #d3d6da"></div>
<div class="a" style="left:328.3px;top:268px;width:1px;height:15px;background:#d3d6da"></div>
<div class="a" style="left:405.2px;top:268px;width:1px;height:15px;background:#d3d6da"></div>
<div class="a" style="left:506.3px;top:268px;width:1px;height:15px;background:#d3d6da"></div>
<div class="a" style="left:583.3px;top:268px;width:1px;height:15px;background:#d3d6da"></div>
<div class="a" style="left:607.5px;top:268px;width:1px;height:15px;background:#d3d6da"></div>
<div class="a" style="left:644.3px;top:268px;width:1px;height:15px;background:#d3d6da"></div>
<div class="a" style="left:720.3px;top:268px;width:1px;height:15px;background:#d3d6da"></div>
<div class="t" style="left:307px;top:272.6px;font-size:7.6px;color:#555">Sa...</div>
<div class="t" style="left:332.3px;top:272.6px;font-size:7.6px;color:#555">Buyer</div>
<div class="t" style="left:409.2px;top:272.6px;font-size:7.6px;color:#555">Contract</div>
<div class="t" style="right:429.1px;top:272.6px;font-size:7.6px;color:#555">Date</div>
<div class="t" style="left:587.3px;top:272.6px;font-size:7.6px;color:#555">Gr...</div>
<div class="t" style="left:607.5px;width:36.799999999999955px;text-align:center;top:272.6px;font-size:7.6px;color:#555">Priority</div>
<div class="t" style="right:292.1px;top:272.6px;font-size:7.6px;color:#555">Price</div>
<div class="t" style="left:724.3px;top:272.6px;font-size:7.6px;color:#555">Disposition</div>
<div class="t" style="left:316px;top:286.6px;font-size:7.6px;color:#444">1</div>
<div class="t lk" style="left:334px;top:286.6px;font-size:7.6px">Buyer 1</div>
<div class="t lk" style="left:410.5px;top:286.6px;font-size:7.6px">Buyer 1</div>
<div class="t" style="right:420px;top:286.6px;font-size:7.6px;color:#444">1/06 5:42:32 PM</div>
<div class="t" style="left:588px;top:286.6px;font-size:7.6px;color:#444">1</div>
<div class="a" style="left:624px;top:287.3px;width:6px;height:6px;border-radius:3px;background:#9ac21c"></div>
<div class="t" style="right:282px;top:286.6px;font-size:7.6px;color:#444">$1.00</div>
<div class="a" style="left:725px;top:284.3px;width:32px;height:12px;background:#a6f2a4;border:1px solid #2fbd35"></div>
<div class="t lk" style="left:727px;top:286.6px;font-size:7.6px;color:#1d8fd0">Success</div>
<div class="a" style="left:304px;top:296.4px;width:646px;height:12.4px;background:#f3f3f3"></div>
<div class="t" style="left:316px;top:299.0px;font-size:7.6px;color:#444">1</div>
<div class="t lk" style="left:334px;top:299.0px;font-size:7.6px">Buyer 2</div>
<div class="t lk" style="left:410.5px;top:299.0px;font-size:7.6px">Buyer 2</div>
<div class="t" style="right:420px;top:299.0px;font-size:7.6px;color:#444">1/06 5:42:32 PM</div>
<div class="t" style="left:588px;top:299.0px;font-size:7.6px;color:#444">2</div>
<div class="a" style="left:624px;top:299.7px;width:6px;height:6px;border-radius:3px;background:#9ac21c"></div>
<div class="t" style="right:282px;top:299.0px;font-size:7.6px;color:#444">$1.00/$13.25</div>
<div class="t" style="left:725px;top:299.0px;font-size:7.6px;color:#444">Beat by Last Post Date (Last Posted Date: 1/06/15 5:42:09 PM)</div>
<div class="t" style="left:316px;top:311.40000000000003px;font-size:7.6px;color:#444">1</div>
<div class="t lk" style="left:334px;top:311.40000000000003px;font-size:7.6px">Buyer 1</div>
<div class="t lk" style="left:410.5px;top:311.40000000000003px;font-size:7.6px">Buyer 1</div>
<div class="t" style="right:420px;top:311.40000000000003px;font-size:7.6px;color:#444">1/06 5:42:32 PM</div>
<div class="t" style="left:588px;top:311.40000000000003px;font-size:7.6px;color:#444">2</div>
<div class="a" style="left:624px;top:312.1px;width:6px;height:6px;border-radius:3px;background:#d8424a"></div>
<div class="t" style="right:282px;top:311.40000000000003px;font-size:7.6px;color:#444">$10.00/$13.25</div>
<div class="t" style="left:725px;top:311.40000000000003px;font-size:7.6px;color:#444">Beat by Priority Sell</div>
<div class="a" style="left:304px;top:321.2px;width:646px;height:12.4px;background:#f3f3f3"></div>
<div class="t" style="left:316px;top:323.8px;font-size:7.6px;color:#444">1</div>
<div class="t lk" style="left:334px;top:323.8px;font-size:7.6px">Buyer Name</div>
<div class="t lk" style="left:410.5px;top:323.8px;font-size:7.6px">Buyer Name</div>
<div class="t" style="right:420px;top:323.8px;font-size:7.6px;color:#444">1/06 5:42:32 PM</div>
<div class="t" style="left:588px;top:323.8px;font-size:7.6px;color:#444">2</div>
<div class="a" style="left:624px;top:324.5px;width:6px;height:6px;border-radius:3px;background:#d8424a"></div>
<div class="t" style="right:282px;top:323.8px;font-size:7.6px;color:#444">$2.25/$13.25</div>
<div class="t" style="left:725px;top:323.8px;font-size:7.6px;color:#444">Beat by Weighted Price</div>
<div class="a" style="left:304px;top:504px;width:647px;height:15.5px;background:#e8ebee;border-bottom:1px solid #a9c8e8"></div>
<div class="a" style="left:316.0px;top:509.5px;width:2.6px;height:2.6px;border-radius:1.3px;background:#333"></div>
<div class="a" style="left:577.1px;top:509.5px;width:2.6px;height:2.6px;border-radius:1.3px;background:#333"></div>
<div class="a" style="left:625.5px;top:509.5px;width:2.6px;height:2.6px;border-radius:1.3px;background:#333"></div>
<div class="a" style="left:714.7px;top:509.5px;width:2.6px;height:2.6px;border-radius:1.3px;background:#333"></div>
<div class="a" style="left:724.7px;top:509.5px;width:2.6px;height:2.6px;border-radius:1.3px;background:#333"></div>
<div class="t" style="left:333.5px;top:508.5px;font-size:7.4px;font-weight:bold;color:#333">3</div>
<div class="t" style="left:410px;top:508.5px;font-size:7.4px;font-weight:bold;color:#333">3</div>
<div class="t" style="left:586.5px;top:508.5px;font-size:7.4px;font-weight:bold;color:#333">4</div>
<div class="a" style="left:304px;top:520px;width:647px;height:21.5px;background:#e8ebee;border-bottom:1px solid #d3d6da"></div>
<svg class="a" style="left:308.8px;top:524.8px" width="12" height="10" viewBox="0 0 12 10"><path d="M5 0.8 L1 5 L5 9.2 M10.5 0.8 L6.5 5 L10.5 9.2" fill="none" stroke="#a3a8ae" stroke-width="1.2"/></svg>
<svg class="a" style="left:333px;top:524.8px" width="7" height="10" viewBox="0 0 7 10"><path d="M5.5 0.8 L1.2 5 L5.5 9.2" fill="none" stroke="#a3a8ae" stroke-width="1.2"/></svg>
<div class="t" style="left:350.5px;top:526.1999999999999px;font-size:7.6px;color:#666">Page</div>
<div class="a" style="left:372.2px;top:523.8px;width:17.5px;height:12px;background:#fff;border:1px solid #c5c9ce"></div>
<div class="t" style="right:612.3px;top:526.1999999999999px;font-size:7.6px;color:#555">1</div>
<div class="t" style="left:392.7px;top:526.1999999999999px;font-size:7.6px;color:#666">of 1</div>
<svg class="a" style="left:417.8px;top:524.8px" width="7" height="10" viewBox="0 0 7 10"><path d="M1 0.8 L5.3 5 L1 9.2" fill="none" stroke="#a3a8ae" stroke-width="1.2"/></svg>
<svg class="a" style="left:436.8px;top:524.8px" width="12" height="10" viewBox="0 0 12 10"><path d="M1 0.8 L5 5 L1 9.2 M6.5 0.8 L10.5 5 L6.5 9.2" fill="none" stroke="#a3a8ae" stroke-width="1.2"/></svg>
<svg class="a" style="left:460.2px;top:524.3px" width="12" height="11" viewBox="0 0 12 11"><path d="M9.8 3.6 A4.5 4.5 0 1 0 10.2 7" fill="none" stroke="#a3a8ae" stroke-width="1.3"/><path d="M7.2 1 L10.4 3.6 L11.2 0" fill="none" stroke="#a3a8ae" stroke-width="1.1"/></svg>
<div class="t" style="left:477.4px;top:526.1999999999999px;font-size:7.6px;color:#666">Rows Per Page:</div>
<div class="a" style="left:536.2px;top:523.8px;width:27.5px;height:12.5px;background:#fff;border:1px solid #c5c9ce"></div>
<div class="a" style="left:551.7px;top:524.8px;width:11px;height:10.5px;background:#eef0f3;border-left:1px solid #c5c9ce"></div>
<svg class="a" style="left:553.2px;top:527.3px" width="8" height="6" viewBox="0 0 8 6"><path d="M1.5 1.8 L4 4.3 L6.5 1.8" fill="none" stroke="#1f4e8c" stroke-width="1.5"/></svg>
<div class="t" style="left:537.2px;top:526.1999999999999px;font-size:7.6px;color:#333">30</div>
<div class="t" style="right:50.5px;top:526.1999999999999px;font-size:7.7px;color:#666">Displaying Items 1 - 4 of 4</div></body></html>
